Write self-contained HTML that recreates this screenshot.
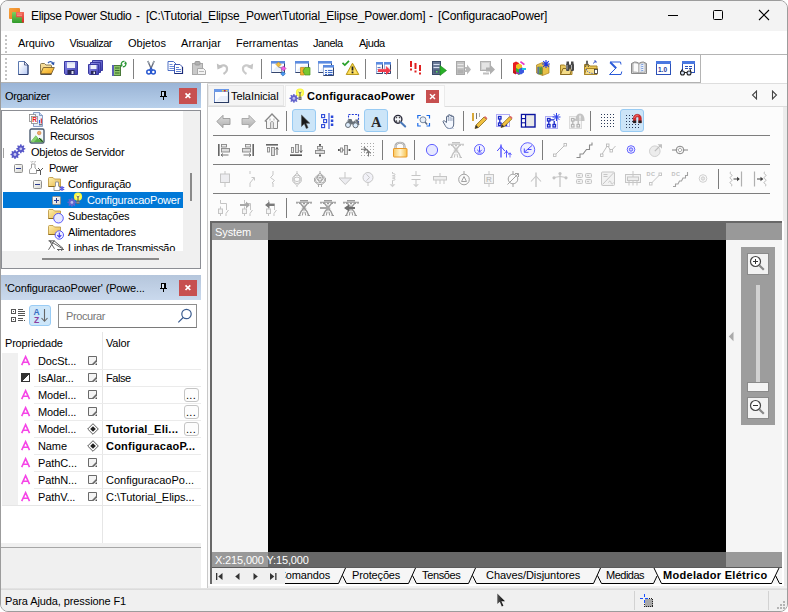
<!DOCTYPE html>
<html lang="pt"><head><meta charset="utf-8"><title>Elipse Power Studio</title>
<style>
html,body{margin:0;padding:0}
body{width:788px;height:612px;background:#fff;overflow:hidden;position:relative;font-family:"Liberation Sans",sans-serif;font-size:11px;color:#000}
#win{position:absolute;left:0;top:0;width:786px;height:610px;border:1px solid #9c9c9c;border-radius:8px;background:#f0f0f0;overflow:hidden}
/* all children positioned relative to #win padding box => offset by 1px; use wrapper shifted -1 */
#o{position:absolute;left:-1px;top:-1px;width:788px;height:612px}
.a{position:absolute}
.i{position:absolute;overflow:visible}
.t{position:absolute;white-space:pre;line-height:14px;height:14px}
.hl{position:absolute;height:1px;background:#a0a0a0}
.vl{position:absolute;width:1px;background:#a0a0a0}

</style></head>
<body>
<div id="win">
<div id="o">
<!-- title bar -->
<div class="a" style="left:0;top:0;width:788px;height:31px;background:#f3f3f3"></div>
<svg class="i" style="left:9px;top:8px" width="16" height="16" viewBox="0 0 16 16">
<defs><linearGradient id="gO" x1="0" y1="0" x2="1" y2="1"><stop offset="0" stop-color="#f7a540"/><stop offset="1" stop-color="#e8781a"/></linearGradient>
<linearGradient id="gG" x1="0" y1="0" x2="0" y2="1"><stop offset="0" stop-color="#7fd060"/><stop offset="1" stop-color="#2f9a2a"/></linearGradient>
<linearGradient id="gR" x1="0" y1="0" x2="0" y2="1"><stop offset="0" stop-color="#f46a5a"/><stop offset="1" stop-color="#d92b25"/></linearGradient></defs>
<rect x="0" y="0" width="11" height="11" rx="1" fill="url(#gO)"/>
<rect x="3" y="4" width="12" height="11" rx="1" fill="url(#gG)"/>
<path d="M7 4h8v10.5h-2.2V9.2H7z" fill="url(#gR)"/>
<path d="M8 6h5M8 7.6h5" stroke="#f9a79c" stroke-width=".7"/>
</svg>
<div class="t" style="left:31px;top:9px;font-size:12px;letter-spacing:-0.37px">Elipse Power Studio</div>
<div class="t" style="left:136px;top:9px;font-size:12px">-</div>
<div class="t" style="left:146px;top:9px;font-size:12px;letter-spacing:-0.215px">[C:\Tutorial_Elipse_Power\Tutorial_Elipse_Power.dom]</div>
<div class="t" style="left:429px;top:9px;font-size:12px">-</div>
<div class="t" style="left:438px;top:9px;font-size:12px;letter-spacing:-0.15px">[ConfiguracaoPower]</div>
<svg class="i" style="left:660px;top:4px" width="120" height="24" viewBox="0 0 120 24" fill="none" stroke="#000" stroke-width="1">
<path d="M8 11.5h10"/><rect x="53.5" y="6.500" width="9" height="9" rx="1"/><path d="M99 6l10 10M109 6l-10 10" stroke-width="1.1"/>
</svg>
<!-- menu bar -->
<div class="a" style="left:1px;top:31px;width:786px;height:23px;background:#fff"></div>
<svg class="i" style="left:4px;top:34px" width="4" height="20" viewBox="0 0 4 20" shape-rendering="crispEdges"><g fill="#c4c4c4"><rect x="1" y="1" width="2" height="2"/><rect x="1" y="5" width="2" height="2"/><rect x="1" y="9" width="2" height="2"/><rect x="1" y="13" width="2" height="2"/><rect x="1" y="17" width="2" height="2"/></g></svg>
<div class="t" style="left:18px;top:36px;letter-spacing:-0.1px">Arquivo</div>
<div class="t" style="left:69.500px;top:36px;letter-spacing:-0.5px">Visualizar</div>
<div class="t" style="left:128px;top:36px;letter-spacing:0px">Objetos</div>
<div class="t" style="left:181px;top:36px;letter-spacing:0.1px">Arranjar</div>
<div class="t" style="left:236px;top:36px;letter-spacing:0px">Ferramentas</div>
<div class="t" style="left:313px;top:36px;letter-spacing:-0.45px">Janela</div>
<div class="t" style="left:359px;top:36px;letter-spacing:-0.5px">Ajuda</div>
<!-- toolbar band -->
<div class="a" style="left:1px;top:54px;width:786px;height:29px;background:#fff"></div>
<div class="hl" style="left:1px;top:54px;width:786px;background:#b4b4b4"></div>
<div class="hl" style="left:1px;top:82px;width:700px;background:#b2b2b2"></div>
<div class="vl" style="left:700px;top:54px;height:29px;background:#b4b4b4"></div>
<svg class="i" style="left:4px;top:57px" width="4" height="24" viewBox="0 0 4 24" shape-rendering="crispEdges"><g fill="#c4c4c4"><rect x="1" y="1" width="2" height="2"/><rect x="1" y="5" width="2" height="2"/><rect x="1" y="9" width="2" height="2"/><rect x="1" y="13" width="2" height="2"/><rect x="1" y="17" width="2" height="2"/><rect x="1" y="21" width="2" height="2"/></g></svg>

<svg class="i" style="left:15px;top:60px" width="16" height="16" viewBox="0 0 16 16" ><defs><linearGradient id="gN" x1="0" y1="0" x2="1" y2="1"><stop offset=".2" stop-color="#fff"/><stop offset="1" stop-color="#b4c8f4"/></linearGradient></defs><path d="M3.500 1.500h6l3.500 3.500v9.500h-9.500z" fill="url(#gN)" stroke="#5a78b0"/><path d="M13 5v9.500h-9.500" fill="none" stroke="#2a3a68"/><path d="M9.500 1.500v3.500h3.500z" fill="#e8eefc" stroke="#3a4a78" stroke-width=".8"/></svg>
<svg class="i" style="left:39px;top:60px" width="16" height="16" viewBox="0 0 16 16" ><defs><linearGradient id="gOp" x1="0" y1="0" x2="1" y2="1"><stop offset="0" stop-color="#ffe070"/><stop offset="1" stop-color="#f0a018"/></linearGradient></defs><path d="M1.500 13.500v-9c0-.6.400-1 1-1h3l1.500 1.500h4.500c.6 0 1 .4 1 1v1.500" fill="#f4dc98" stroke="#8a7a50"/><path d="M1.500 14l2.800-6.500h11l-3 6.500z" fill="url(#gOp)" stroke="#7a6030" stroke-width=".9"/><path d="M1.500 14.200h11" stroke="#3a3020" stroke-width="1.100"/><path d="M9 3c1.500-2 4-1.800 5 .8" fill="none" stroke="#3a62b5" stroke-width="1.300"/><path d="M15.500 1.800l-.5 3.500-3-1.500z" fill="#2a52a8"/></svg>
<svg class="i" style="left:63px;top:60px" width="16" height="16" viewBox="0 0 16 16" ><defs><linearGradient id="gS" x1="0" y1="0" x2="1" y2="1"><stop offset="0" stop-color="#8a8ae8"/><stop offset="1" stop-color="#4040b0"/></linearGradient></defs><path d="M1.500 1.500h13v13h-12l-1-1z" fill="url(#gS)" stroke="#3838a0"/><rect x="4" y="2" width="8" height="6" fill="#eef0fa"/><path d="M4 2h8v1.500h-8z" fill="#d0d8f0"/><rect x="4.500" y="10" width="7" height="4.500" fill="#282858"/><rect x="8.500" y="11" width="2" height="3" fill="#e0e4f4"/></svg>
<svg class="i" style="left:87px;top:60px" width="16" height="16" viewBox="0 0 16 16" ><defs><linearGradient id="gS2" x1="0" y1="0" x2="1" y2="1"><stop offset="0" stop-color="#9090e8"/><stop offset="1" stop-color="#4040b0"/></linearGradient></defs><path d="M5.500 .5h10v10h-10z" fill="url(#gS2)" stroke="#3838a0"/><path d="M3.500 2.500h10v10h-10z" fill="url(#gS2)" stroke="#3838a0"/><path d="M1.500 4.500h10v10h-9l-1-1z" fill="url(#gS2)" stroke="#3838a0"/><rect x="3.500" y="5" width="6" height="4" fill="#eef0fa"/><rect x="4" y="11" width="5" height="3.500" fill="#282858"/><rect x="6.500" y="11.700" width="1.500" height="2.300" fill="#e0e4f4"/></svg>
<svg class="i" style="left:111px;top:60px" width="16" height="16" viewBox="0 0 16 16" ><rect x="1.500" y="5.500" width="8" height="10" fill="#8ec46a" stroke="#4a7a3a"/><rect x="1" y="5" width="2" height="11" fill="#5b60b8"/><path d="M4 8h4.500M4 10.500h4.500M4 13h4.500" stroke="#356a2a" stroke-width="1.200"/><path d="M10.500 5.500c-1-2.500 1-4.500 3-4" fill="none" stroke="#2f9a3a" stroke-width="1.300"/><path d="M9 5l1.800 2 1.200-2.600z" fill="#2f9a3a"/><path d="M14.500 2.500c1.200 2.300-.5 4.600-2.700 4.200" fill="none" stroke="#2f9a3a" stroke-width="1.300"/><path d="M16 3.500l-1.700-2.200-1.200 2.600z" fill="#2f9a3a"/></svg>
<div class="a" style="left:133px;top:59px;width:1px;height:20px;background:#808080"></div>
<svg class="i" style="left:143px;top:60px" width="16" height="16" viewBox="0 0 16 16" ><path d="M4.800 1l3.700 8.500M11.200 1l-3.700 8.500" stroke="#6a7080" stroke-width="1.400" fill="none"/><path d="M4.800 1l1.500 2.500M11.200 1l-1.500 2.500" stroke="#a0a8b0" stroke-width="1.400"/><circle cx="5.800" cy="12" r="2" fill="#fff" stroke="#2858d0" stroke-width="1.500"/><circle cx="10.300" cy="12" r="2" fill="#fff" stroke="#2858d0" stroke-width="1.500"/><path d="M6.500 10l1.500-1.800 1.500 1.800" stroke="#2858d0" stroke-width="1.300" fill="none"/></svg>
<svg class="i" style="left:167px;top:60px" width="16" height="16" viewBox="0 0 16 16" ><path d="M1 1.500h5.500l2.500 2.500v6.500h-8z" fill="#fff" stroke="#3a60c0" stroke-width=".9"/><path d="M2.500 4.500h3M2.500 6.500h4.500M2.500 8.500h4.500" stroke="#5b80d8" stroke-width=".9"/><path d="M7.500 4.500h5.500l2.500 2.500v6.500h-8z" fill="#fff" stroke="#2b45a8" stroke-width=".9"/><path d="M15.500 7v6.500h-8" fill="none" stroke="#1a2a78" stroke-width="1.200"/><path d="M9 7.500h3M9 9.500h5M9 11.500h5" stroke="#4a70d0" stroke-width=".9"/></svg>
<svg class="i" style="left:191px;top:60px" width="16" height="16" viewBox="0 0 16 16" ><rect x="1.500" y="3.500" width="10" height="11" fill="#c9c9c9" stroke="#a8a8a8"/><rect x="4" y="1.500" width="5" height="3.500" rx="1" fill="#b0b0b0" stroke="#9a9a9a"/><path d="M6.500 8.500h6l2 2v4h-8z" fill="#f3f3f3" stroke="#a8a8a8"/><path d="M8 11.500h5" stroke="#b8b8b8"/></svg>
<svg class="i" style="left:215px;top:60px" width="16" height="16" viewBox="0 0 16 16" ><path d="M5 6.500c2-2 6.500-1.500 7 1.500.3 2.500-1 4.500-3.500 6" fill="none" stroke="#c4c4c4" stroke-width="2.200"/><path d="M1.800 3.500l.7 6 5.500-2.500z" fill="#c0c0c0"/></svg>
<svg class="i" style="left:239px;top:60px" width="16" height="16" viewBox="0 0 16 16" ><path d="M11 6.500c-2-2-6.500-1.500-7 1.500-.3 2.500 1 4.500 3.500 6" fill="none" stroke="#cacaca" stroke-width="2.200"/><path d="M14.200 3.500l-.7 6-5.500-2.500z" fill="#c6c6c6"/></svg>
<div class="a" style="left:261px;top:59px;width:1px;height:20px;background:#808080"></div>
<svg class="i" style="left:268px;top:60px" width="16" height="16" viewBox="0 0 16 16" ><rect x="3.5" y="1.5" width="13" height="11" fill="#fff" stroke="#90a8d8" stroke-width=".9"/><path d="M16.5 3v9.5h-13" fill="none" stroke="#34446c" stroke-width="1"/><rect x="3" y="1" width="14" height="2.600" fill="#5b8be0"/><path d="M4 11.5l5.4 -6h6.6v6z" fill="#e4ecfa" opacity=".8"/><path d="M10.500 7.500h3v5" fill="none" stroke="#888" stroke-width=".8"/><path d="M10.500 2l2.500 2.500-2.500 2.500L8 4.500z" fill="#f4c040" stroke="#b88820" stroke-width=".6"/><path d="M15.500 6l2.500 2.500-2.500 2.500L13 8.500z" fill="#f060e0" stroke="#b030a8" stroke-width=".6"/><path d="M15 11.500l2.300 2.300-2.300 2.300-2.300-2.300z" fill="#4a98f0" stroke="#1a60b8" stroke-width=".6"/></svg>
<svg class="i" style="left:292px;top:60px" width="16" height="16" viewBox="0 0 16 16" ><rect x="3.5" y="1.5" width="13" height="11" fill="#fff" stroke="#90a8d8" stroke-width=".9"/><path d="M16.5 3v9.5h-13" fill="none" stroke="#34446c" stroke-width="1"/><rect x="3" y="1" width="14" height="2.600" fill="#5b8be0"/><path d="M4 11.5l5.4 -6h6.6v6z" fill="#e4ecfa" opacity=".8"/><path d="M8.500 7.500h4l-1.500 3.500 1.500 4h-4z" fill="#f4b030" stroke="#c08818" stroke-width=".7"/><path d="M18 7.500v7.500h-5l-2-4 2-3.500z" fill="#78c830" stroke="#48901c" stroke-width=".7"/></svg>
<svg class="i" style="left:315px;top:60px" width="16" height="16" viewBox="0 0 16 16" ><rect x="3.5" y="1.5" width="13" height="11" fill="#fff" stroke="#90a8d8" stroke-width=".9"/><path d="M16.5 3v9.5h-13" fill="none" stroke="#34446c" stroke-width="1"/><rect x="3" y="1" width="14" height="2.600" fill="#5b8be0"/><path d="M4 11.5l5.4 -6h6.6v6z" fill="#e4ecfa" opacity=".8"/><rect x="8.5" y="5.5" width="10" height="10" fill="#fff" stroke="#90a8d8" stroke-width=".9"/><path d="M18.5 7v8.5h-10" fill="none" stroke="#34446c" stroke-width="1"/><rect x="8" y="5" width="11" height="2.600" fill="#5b8be0"/><path d="M9 14.5l4.05 -5.2h4.95v5.2z" fill="#e4ecfa" opacity=".8"/><path d="M10 10.500h2M13 10.500h4.500M10 12.500h2M13 12.500h4.500M10 14.500h2M13 14.500h4.500" stroke="#3a68c8" stroke-width="1.100"/></svg>
<svg class="i" style="left:344px;top:60px" width="16" height="16" viewBox="0 0 16 16" ><path d="M8.500 3.200l6.300 11.300h-12.600z" fill="#f4d030" stroke="#b89820" stroke-linejoin="round" stroke-width="1"/><path d="M8.500 5l4.800 8.700h-9.600z" fill="#fce068"/><rect x="7.600" y="6.500" width="1.800" height="4" fill="#222"/><rect x="7.600" y="11.500" width="1.800" height="1.800" fill="#222"/><path d="M-1.500 2.800l2.300 2.300 4.200-4.300" fill="none" stroke="#28a028" stroke-width="1.700"/></svg>
<div class="a" style="left:365px;top:59px;width:1px;height:20px;background:#808080"></div>
<svg class="i" style="left:375px;top:60px" width="16" height="16" viewBox="0 0 16 16" ><rect x="1.5" y="2.5" width="6" height="11" fill="#fff" stroke="#90a8d8" stroke-width=".9"/><path d="M7.5 4v9.5h-6" fill="none" stroke="#34446c" stroke-width="1"/><rect x="1" y="2" width="7" height="2.600" fill="#5b8be0"/><path d="M2 12.5l2.25 -6h2.75v6z" fill="#e4ecfa" opacity=".8"/><rect x="9.5" y="2.5" width="6" height="11" fill="#fff" stroke="#90a8d8" stroke-width=".9"/><path d="M15.5 4v9.5h-6" fill="none" stroke="#34446c" stroke-width="1"/><rect x="9" y="2" width="7" height="2.600" fill="#5b8be0"/><path d="M10 12.5l2.25 -6h2.75v6z" fill="#e4ecfa" opacity=".8"/><path d="M2.500 7.500h3M2.500 9.500h3M2.500 11.500h3" stroke="#3a55b0" stroke-width=".8"/><path d="M3 9h8v-3l5 4.500-5 4.500v-3h-8z" fill="#f03a4a"/><path d="M3 9h8v-3l5 4.500" fill="none" stroke="#f8a0a8" stroke-width=".5"/></svg>
<div class="a" style="left:397px;top:59px;width:1px;height:20px;background:#808080"></div>
<svg class="i" style="left:407px;top:60px" width="16" height="16" viewBox="0 0 16 16" ><g fill="#e02020"><rect x="3" y="1" width="2" height="6"/><rect x="3" y="8.500" width="2" height="2"/><rect x="7.500" y="3" width="2" height="6"/><rect x="7.500" y="10.500" width="2" height="2"/><rect x="12" y="5" width="2" height="6"/><rect x="12" y="12.500" width="2" height="2"/></g></svg>
<svg class="i" style="left:431px;top:60px" width="16" height="16" viewBox="0 0 16 16" ><rect x="1.500" y="1.500" width="8" height="13" fill="#6a7a98" stroke="#3a4a68"/><path d="M2.500 4.500h6M2.500 7.500h6" stroke="#d8e0f0"/><rect x="2.500" y="9.500" width="6" height="4" fill="#4a5a78"/><rect x="5" y="11" width="1.500" height="1.500" fill="#5be05b"/><path d="M9 5.500l6.500 5-6.500 5z" fill="#28b028" stroke="#188018" stroke-width=".6"/></svg>
<svg class="i" style="left:455px;top:60px" width="16" height="16" viewBox="0 0 16 16" ><rect x="1.500" y="1.500" width="8" height="13" fill="#c4c4c4" stroke="#a8a8a8"/><path d="M2.500 4.500h6M2.500 7.500h6" stroke="#e8e8e8"/><rect x="2.500" y="9.500" width="6" height="4" fill="#b0b0b0"/><path d="M9 7h3v-2.500l4 5-4 5v-2.500h-3l2-2.500z" fill="#b8b8b8"/></svg>
<svg class="i" style="left:479px;top:60px" width="16" height="16" viewBox="0 0 16 16" ><rect x="1.500" y="1.500" width="10" height="9" fill="#d0d0d0" stroke="#b0b0b0"/><rect x="3" y="3" width="7" height="6" fill="#e4e4e4"/><path d="M4 12.500h6v2h-6z" fill="#c0c0c0"/><path d="M7 7.500h4v-3l5 5-5 5v-3h-4z" fill="#b0b0b0"/></svg>
<div class="a" style="left:501px;top:59px;width:1px;height:20px;background:#808080"></div>
<svg class="i" style="left:511px;top:60px" width="16" height="16" viewBox="0 0 16 16" ><path d="M2 3l3-1.500 3 1.500v9l-3 2-3-1.500z" fill="#e82020"/><path d="M5 8l3-1.500 3 1.500v5l-3 2-3-2z" fill="#28b838"/><path d="M5 5l3-1.500 3 1.500v3l-3 1.500-3-1.500z" fill="#f0c020"/><path d="M8 9l3-1.500 2 1v4l-3 2-2-1z" fill="#3a58e0"/><path d="M10 1l4 3-1.200 1.200-4-3z" fill="#e838c8"/><path d="M11 8h4v2h-4z" fill="#20c8e0"/><path d="M2 10l3 1.500v3l-3-1.500z" fill="#c01818"/><path d="M5 11.500l3 1.500v2l-3-2z" fill="#a030b8"/></svg>
<svg class="i" style="left:535px;top:60px" width="16" height="16" viewBox="0 0 16 16" ><path d="M1.500 5l6-2.500 6.500 2.500v8l-6.500 2.500-6-2.500z" fill="#e8c048" stroke="#a88020" stroke-width=".7"/><path d="M7.500 7.500v8" stroke="#a88020" stroke-width=".7"/><rect x="3" y="7" width="4" height="7" fill="#78b858" stroke="#4a7a3a" stroke-width=".6"/><rect x="2.500" y="7" width="1.200" height="7" fill="#5b60b8"/><path d="M4.500 9h2M4.500 11h2M4.500 13h2" stroke="#356a2a"/><path d="M11 0v8M7 4h8M8.200 1.200l5.600 5.600M13.800 1.200L8.200 6.800" stroke="#2038e0" stroke-width="1.100"/></svg>
<svg class="i" style="left:559px;top:60px" width="16" height="16" viewBox="0 0 16 16" ><path d="M1.500 14.500v-9.500h4l1.500 1.500h6v8z" fill="#e8c860" stroke="#a88428"/><path d="M1.500 14.500l2.500-6h9l-2 6z" fill="#f4dc88" stroke="#8a6a20"/><g fill="#484848"><rect x="7" y="3.500" width="3.500" height="7.500" rx="1.200"/><rect x="11.500" y="3.500" width="3.500" height="7.500" rx="1.200"/><rect x="10" y="5" width="2" height="3"/><rect x="7.500" y="1.500" width="2.500" height="2.500"/><rect x="12" y="1.500" width="2.500" height="2.500"/></g><path d="M8 5v4.500M12.500 5v4.500" stroke="#b0b0b0" stroke-width="1"/></svg>
<svg class="i" style="left:583px;top:60px" width="16" height="16" viewBox="0 0 16 16" ><path d="M1.500 14.500v-10h4l1.500 1.500h7v8.500z" fill="#ecc858" stroke="#a88428"/><path d="M1.500 14.500l2-6h11l-2 6z" fill="#f6de8a" stroke="#a88428"/><path d="M4 1l-1.500 6M4 1l1.500 6" stroke="#444" stroke-width=".9"/><circle cx="4" cy="1.500" r="1" fill="#666"/><path d="M3 9c1 3 4 4.500 8 4.500" fill="none" stroke="#3a55c8" stroke-width="1" stroke-dasharray="1.200 1.200"/><path d="M10 3.500l3-2.500M13 1h-2M13 1v2" stroke="#3a55c8" stroke-width=".9" fill="none"/><rect x="11.500" y="9.500" width="3" height="4" fill="#fff" stroke="#333" stroke-width=".8"/></svg>
<svg class="i" style="left:607px;top:60px" width="16" height="16" viewBox="0 0 16 16" ><path d="M14 4.500l-.5-2.500h-10.500l6 6-6.500 6.500h11.500l.8-3" fill="none" stroke="#2a5ad8" stroke-width="1" stroke-linejoin="miter"/><path d="M3.200 2.200l6 6" stroke="#2a5ad8" stroke-width="2"/></svg>
<svg class="i" style="left:631px;top:60px" width="16" height="16" viewBox="0 0 16 16" ><path d="M.5 3.500l3-1.500c2 0 3.500.5 4.500 1.500 1-1 2.500-1.500 4.500-1.500l3 1.500v10h-15z" fill="#d8d8d8" stroke="#707070" stroke-width=".8"/><path d="M2 3c2-.5 4.500 0 6 1.200v9c-1.500-1-4-1.500-6-1z" fill="#fafafa" stroke="#808080" stroke-width=".6"/><path d="M14 3c-2-.5-4.500 0-6 1.200v9c1.500-1 4-1.500 6-1z" fill="#fafafa" stroke="#808080" stroke-width=".6"/><path d="M9.500 5l3-.8M9.500 7l3-.8M9.500 9l3-.8M9.500 11l3-.8" stroke="#5a88d8" stroke-width=".8"/></svg>
<svg class="i" style="left:655px;top:60px" width="16" height="16" viewBox="0 0 16 16" ><rect x="1.500" y="1.500" width="14" height="13" fill="#fff" stroke="#2a50b8"/><rect x="1" y="1" width="15" height="3" fill="#4a78e0"/><text x="3" y="12" font-family="Liberation Sans,sans-serif" font-weight="700" font-size="6.500" fill="#1a3aa0">1.0</text></svg>
<svg class="i" style="left:679px;top:60px" width="16" height="16" viewBox="0 0 16 16" ><rect x="3.500" y="1.500" width="12" height="11" fill="#fff" stroke="#2a50b8"/><rect x="3" y="1" width="13" height="3" fill="#4a78e0"/><path d="M6 6.500h3M10 6.500h3M6 8.500h3M10 8.500h3" stroke="#2a50b8" stroke-width="1.200"/><circle cx="3.500" cy="13" r="2" fill="#d8e4f8" stroke="#222" stroke-width="1.100"/><circle cx="10" cy="13" r="2" fill="#d8e4f8" stroke="#222" stroke-width="1.100"/><path d="M5.500 12.500h2.500M1.500 12l2-3M12 12l-1-3" stroke="#222" stroke-width="1" fill="none"/></svg>
<!-- ===== left dock ===== -->
<div class="a" style="left:1px;top:83px;width:206px;height:506px;background:#fff"></div>
<!-- Organizer header -->
<div class="a" style="left:1px;top:83px;width:200px;height:25px;background:linear-gradient(#9ab4d6,#b8d0eb)"></div>
<div class="t" style="left:5px;top:89px;letter-spacing:-0.38px">Organizer</div>
<svg class="i" style="left:159px;top:91px" width="9" height="10" viewBox="0 0 9 10" shape-rendering="crispEdges"><rect x="2" y="0" width="5" height="5" fill="#000"/><rect x="3" y="1" width="2" height="4" fill="#c4d6ec"/><rect x="1" y="5" width="7" height="1" fill="#000"/><rect x="4" y="6" width="1" height="3" fill="#000"/></svg>
<div class="a" style="left:179px;top:88px;width:18px;height:16px;background:#c75050"></div>
<svg class="i" style="left:184px;top:92px" width="8" height="8" viewBox="0 0 8 8"><path d="M1.500 1.300l4.800 4.700M6.300 1.300l-4.800 4.700" stroke="#fff" stroke-width="1.700"/></svg>
<!-- tree box -->
<div class="a" style="left:1px;top:110px;width:198px;height:157px;border:1px solid #8c8e94;border-bottom-color:#8c8e94;background:#f0f0f0"></div>
<div class="a" id="tree" style="left:2px;top:111px;width:181px;height:140px;background:#fff;overflow:hidden">
 <div class="a" style="left:1px;top:81px;width:180px;height:16px;background:#0078d7"></div>
 <div class="a" style="left:1px;top:37px;width:1px;height:10px;background:#a0a0a0"></div>
 <!-- rows: y offsets relative to tree (tree top=111) -->
 <div class="t" style="left:48px;top:2px;letter-spacing:-0.2px">Relatórios</div>
 <div class="t" style="left:48px;top:18px;letter-spacing:-0.33px">Recursos</div>
 <div class="t" style="left:29px;top:34px;letter-spacing:-0.2px">Objetos de Servidor</div>
 <div class="t" style="left:47px;top:50px;letter-spacing:-0.5px">Power</div>
 <div class="t" style="left:66px;top:66px;letter-spacing:-0.2px">Configuração</div>
 <div class="t" style="left:85px;top:82px;letter-spacing:-0.2px;color:#fff">ConfiguracaoPower</div>
 <div class="t" style="left:66px;top:98px;letter-spacing:-0.2px">Subestações</div>
 <div class="t" style="left:66px;top:114px;letter-spacing:-0.2px">Alimentadores</div>
 <div class="t" style="left:66px;top:130px;letter-spacing:-0.29px">Linhas de Transmissão</div>
 <svg class="i" style="left:27px;top:1px" width="16" height="16" viewBox="0 0 16 16"><path d="M4.500 .5h6l3 3v11h-9z" fill="#e8f0fc" stroke="#7088b8" stroke-width=".8"/><path d="M10.500 .5v3h3" fill="#c8d8f0" stroke="#7088b8" stroke-width=".8"/><rect x=".5" y="2.500" width="6" height="7" fill="#fff" stroke="#888" stroke-width=".8"/><rect x="2.500" y="4.500" width="6" height="7" fill="#fff" stroke="#888" stroke-width=".8"/><text x="3.300" y="10.300" font-family="Liberation Sans,sans-serif" font-weight="700" font-size="6.500" fill="#e81818">R</text><path d="M10.500 8v3.500" stroke="#2858e0" stroke-width="1.100"/><path d="M12.300 6.500v5" stroke="#e02020" stroke-width="1.100"/><path d="M10 12.800h3" stroke="#333" stroke-width=".9"/></svg>
<svg class="i" style="left:27px;top:17px" width="16" height="16" viewBox="0 0 16 16"><rect x="1" y="1" width="14" height="14" rx="1.500" fill="#f4f8fc" stroke="#4a5a70" stroke-width="1.400"/><circle cx="10.200" cy="5" r="1.800" fill="#f0a868" stroke="#c87838" stroke-width=".6"/><path d="M1.800 13.500l5-6 3.500 4 1.500-1.500 2.500 3v1.200h-12.500z" fill="#58b048"/><path d="M1.800 13.500l5-6 2 2.300-4 4.400z" fill="#88d070"/><path d="M10 10l3.500 3.800" stroke="#222" stroke-width="1"/></svg>
<svg class="i" style="left:8px;top:33px" width="16" height="16" viewBox="0 0 16 16"><polygon points="15.37,4.25 15.37,5.35 13.99,5.69 13.69,6.42 14.42,7.64 13.64,8.42 12.42,7.69 11.69,7.99 11.35,9.37 10.25,9.37 9.91,7.99 9.18,7.69 7.96,8.42 7.18,7.64 7.91,6.42 7.61,5.69 6.23,5.35 6.23,4.25 7.61,3.91 7.91,3.18 7.18,1.96 7.96,1.18 9.18,1.91 9.91,1.61 10.25,0.23 11.35,0.23 11.69,1.61 12.42,1.91 13.64,1.18 14.42,1.96 13.69,3.18 13.99,3.91" fill="#5858c8"/><circle cx="10.8" cy="4.8" r="1.38" fill="#c8c8f0"/><polygon points="9.57,9.95 9.57,11.05 8.19,11.39 7.89,12.12 8.62,13.34 7.84,14.12 6.62,13.39 5.89,13.69 5.55,15.07 4.45,15.07 4.11,13.69 3.38,13.39 2.16,14.12 1.38,13.34 2.11,12.12 1.81,11.39 0.43,11.05 0.43,9.95 1.81,9.61 2.11,8.88 1.38,7.66 2.16,6.88 3.38,7.61 4.11,7.31 4.45,5.93 5.55,5.93 5.89,7.31 6.62,7.61 7.84,6.88 8.62,7.66 7.89,8.88 8.19,9.61" fill="#5858c8"/><circle cx="5" cy="10.5" r="1.38" fill="#c8c8f0"/></svg>
<svg class="i" style="left:12px;top:53px" width="9" height="9" viewBox="0 0 9 9"><defs><linearGradient id="gE" x1="0" y1="0" x2="1" y2="1"><stop offset="0" stop-color="#fff"/><stop offset="1" stop-color="#d8d8d0"/></linearGradient></defs><rect x=".5" y=".5" width="8" height="8" rx="1" fill="url(#gE)" stroke="#919191"/><path d="M2 4.500h5" stroke="#2a3a90"/></svg>
<svg class="i" style="left:27px;top:49px" width="16" height="16" viewBox="0 0 16 16"><path d="M1.500 1l1.500 1.500M4 1L2.500 2.500M4.500 1l1.500 1.500M7 1L5.500 2.500" stroke="#aaa" stroke-width=".7"/><path d="M2.500 4h3.500v4l1.500 1.500v4h-7v-4l2-1.500z" fill="#fff" stroke="#a0a0a0" stroke-width="1"/><path d="M7.500 10.500h4M9 8l2.500 2.500 2.500-2.500M11.500 10.500v4.500" fill="none" stroke="#444" stroke-width=".9"/></svg>
<svg class="i" style="left:31px;top:69px" width="9" height="9" viewBox="0 0 9 9"><defs><linearGradient id="gE" x1="0" y1="0" x2="1" y2="1"><stop offset="0" stop-color="#fff"/><stop offset="1" stop-color="#d8d8d0"/></linearGradient></defs><rect x=".5" y=".5" width="8" height="8" rx="1" fill="url(#gE)" stroke="#919191"/><path d="M2 4.500h5" stroke="#2a3a90"/></svg>
<svg class="i" style="left:46px;top:65px" width="16" height="16" viewBox="0 0 16 16"><defs><linearGradient id="gF" x1="0" y1="0" x2="1" y2="1"><stop offset="0" stop-color="#fff0b0"/><stop offset="1" stop-color="#e8b848"/></linearGradient></defs><path d="M.5 10.500v-8c0-.8.500-1 1-1h3.500l1.500 1.500h6v7.500z" fill="url(#gF)" stroke="#b89038" stroke-width=".8"/><path d="M.5 10.500h12" stroke="#8a6a20" stroke-width="1"/><path d="M7.500 4.500l1 1M9.500 4.500l-1 1" stroke="#bbb" stroke-width=".6"/><path d="M7.500 6h3v4l1.500 1.500v3h-6v-3l1.500-1.500z" fill="#fff" stroke="#909090" stroke-width=".9"/><path d="M14 10v5M11.800 11.200l4.400 2.600M16.200 11.200l-4.400 2.600" stroke="#4848e0" stroke-width="1.100"/></svg>
<svg class="i" style="left:50px;top:85px" width="9" height="9" viewBox="0 0 9 9"><defs><linearGradient id="gE" x1="0" y1="0" x2="1" y2="1"><stop offset="0" stop-color="#fff"/><stop offset="1" stop-color="#d8d8d0"/></linearGradient></defs><rect x=".5" y=".5" width="8" height="8" rx="1" fill="url(#gE)" stroke="#919191"/><path d="M2 4.500h5" stroke="#2a3a90"/><path d="M4.500 2v5" stroke="#2a3a90"/></svg>
<svg class="i" style="left:65px;top:81px" width="16" height="16" viewBox="0 0 16 16"><polygon points="9.37,9.86 9.37,10.94 8.02,11.27 7.72,11.99 8.44,13.18 7.68,13.94 6.49,13.22 5.77,13.52 5.44,14.87 4.36,14.87 4.03,13.52 3.31,13.22 2.12,13.94 1.36,13.18 2.08,11.99 1.78,11.27 0.43,10.94 0.43,9.86 1.78,9.53 2.08,8.81 1.36,7.62 2.12,6.86 3.31,7.58 4.03,7.28 4.36,5.93 5.44,5.93 5.77,7.28 6.49,7.58 7.68,6.86 8.44,7.62 7.72,8.81 8.02,9.53" fill="#6464cc"/><circle cx="4.9" cy="10.4" r="1.35" fill="#c0c0ec"/><defs><radialGradient id="gY2"><stop offset="0" stop-color="#ffffd8"/><stop offset=".6" stop-color="#ffff58"/><stop offset="1" stop-color="#f6f238"/></radialGradient></defs><circle cx="11" cy="4.700" r="4.100" fill="url(#gY2)"/><path d="M9.800 3.800l1.200 1.800 1.200-1.800M11 5.600v3.500" fill="none" stroke="#333" stroke-width=".8"/><rect x="9.500" y="8.800" width="3" height="3.200" fill="#6a6a6a"/><path d="M9.500 10.400h3" stroke="#aaa" stroke-width=".6"/></svg>
<svg class="i" style="left:46px;top:97px" width="16" height="16" viewBox="0 0 16 16"><defs><linearGradient id="gF" x1="0" y1="0" x2="1" y2="1"><stop offset="0" stop-color="#fff0b0"/><stop offset="1" stop-color="#e8b848"/></linearGradient></defs><path d="M.5 10.500v-8c0-.8.500-1 1-1h3.500l1.500 1.500h6v7.500z" fill="url(#gF)" stroke="#b89038" stroke-width=".8"/><path d="M.5 10.500h12" stroke="#8a6a20" stroke-width="1"/><circle cx="10.500" cy="10.200" r="4.800" fill="#e8e8ff" stroke="#4848f8" stroke-width=".9"/></svg>
<svg class="i" style="left:46px;top:113px" width="16" height="16" viewBox="0 0 16 16"><defs><linearGradient id="gF" x1="0" y1="0" x2="1" y2="1"><stop offset="0" stop-color="#fff0b0"/><stop offset="1" stop-color="#e8b848"/></linearGradient></defs><path d="M.5 10.500v-8c0-.8.500-1 1-1h3.500l1.500 1.500h6v7.500z" fill="url(#gF)" stroke="#b89038" stroke-width=".8"/><path d="M.5 10.500h12" stroke="#8a6a20" stroke-width="1"/><circle cx="11.300" cy="11" r="4.200" fill="#f0f0ff" stroke="#4848f8" stroke-width=".9"/><path d="M11.300 8.500v4.500M9.300 11.200l2 2 2-2" fill="none" stroke="#3838f0" stroke-width="1.100"/></svg>
<svg class="i" style="left:46px;top:129px" width="16" height="16" viewBox="0 0 16 16"><g fill="none" stroke="#555" stroke-width=".9"><path d="M.5 .8h6M1.500 .8l5 8M6 .8l-5.500 9M1.500 .8l14 8.500M6 .8l9 7.500M9 9.500h7M10 9.500l1 1.500M13 9.500l1 1.500"/></g></svg>
</div>
<div class="a" style="left:190px;top:173px;width:2px;height:28px;background:#8a8a8a"></div>
<div class="a" style="left:42px;top:258px;width:117px;height:2px;background:#8a8a8a"></div>
<!-- Properties header -->
<div class="a" style="left:1px;top:275px;width:200px;height:25px;background:linear-gradient(#b5c6dc,#cad9ed)"></div>
<div class="t" style="left:5px;top:281px;letter-spacing:-0.16px">'ConfiguracaoPower' (Powe...</div>
<svg class="i" style="left:159px;top:283px" width="9" height="10" viewBox="0 0 9 10" shape-rendering="crispEdges"><rect x="2" y="0" width="5" height="5" fill="#000"/><rect x="3" y="1" width="2" height="4" fill="#dfe8f4"/><rect x="1" y="5" width="7" height="1" fill="#000"/><rect x="4" y="6" width="1" height="3" fill="#000"/></svg>
<div class="a" style="left:179px;top:280px;width:18px;height:16px;background:#c75050"></div>
<svg class="i" style="left:184px;top:284px" width="8" height="8" viewBox="0 0 8 8"><path d="M1.500 1.300l4.800 4.700M6.300 1.300l-4.800 4.700" stroke="#fff" stroke-width="1.700"/></svg>
<!-- prop toolbar -->
<svg class="i" style="left:11px;top:309px" width="15" height="15" viewBox="0 0 15 15" shape-rendering="crispEdges"><g fill="none" stroke="#555"><rect x=".5" y=".5" width="4" height="4"/><rect x=".5" y="8.500" width="4" height="4"/></g><g fill="#555"><rect x="2" y="2" width="1" height="1"/><rect x="2" y="10" width="1" height="1"/><rect x="7" y="0" width="5" height="1"/><rect x="7" y="2" width="7" height="1"/><rect x="7" y="4" width="7" height="1"/><rect x="7" y="6" width="7" height="1"/><rect x="7" y="9" width="5" height="1"/><rect x="7" y="11" width="5" height="1"/><rect x="13" y="11" width="1" height="1"/><rect x="13" y="6" width="1" height="1"/></g></svg>
<div class="a" style="left:29px;top:305px;width:20px;height:19px;border:1px solid #99ccf5;border-radius:3px;background:#cde6f9"></div>
<svg class="i" style="left:33px;top:308px" width="16" height="16" viewBox="0 0 16 16"><text x="0.500" y="7" font-family="Liberation Sans,sans-serif" font-size="8.500" font-weight="700" fill="#3a6fc4">A</text><text x="1" y="14.500" font-family="Liberation Sans,sans-serif" font-size="8.500" font-weight="700" fill="#8c3fa0">Z</text><path d="M11.500 1v12M8.500 10l3 3.300 3-3.300" fill="none" stroke="#666" stroke-width="1.100"/></svg>
<div class="a" style="left:58px;top:304px;width:137px;height:22px;border:1px solid #8e8e8e;border-bottom-color:#7a7a7a;background:#fff"></div>
<div class="t" style="left:66px;top:309px;color:#767676;letter-spacing:-0.38px">Procurar</div>
<svg class="i" style="left:177px;top:308px" width="16" height="16" viewBox="0 0 16 16" fill="none" stroke="#3b5c8f" stroke-width="1.200"><circle cx="9.500" cy="6" r="4.700"/><path d="M6.200 9.500L1.300 14.400"/></svg>
<!-- prop grid -->
<div class="t" style="left:5px;top:336px;letter-spacing:-0.2px">Propriedade</div>
<div class="t" style="left:106px;top:336px;letter-spacing:-0.2px">Valor</div>
<div class="a" style="left:2px;top:353px;width:16px;height:152px;background:#f0f0f0"></div>
<div class="a" style="left:102px;top:332px;width:1px;height:212px;background:#e6e6e6"></div>
<div class="a" style="left:34px;top:369px;width:167px;height:1px;background:#ebebeb"></div>
<svg class="i" style="left:20px;top:355px" width="12" height="12" viewBox="0 0 12 12"><path d="M1.700 10.200L5.600 1.700l3.900 8.500M3.200 7.300h4.800" fill="none" stroke="#f545e6" stroke-width="1.600" stroke-linejoin="miter"/></svg>
<div class="t" style="left:38px;top:354px;letter-spacing:-0.1px">DocSt...</div>
<svg class="i" style="left:88px;top:356px" width="10" height="10" viewBox="0 0 10 10"><path d="M.5 .5h8v5.500L5.500 8.500H.5z" fill="#f4f4f4" stroke="#6a6a6a"/><path d="M8.500 4.500L4.500 8.500" stroke="#6a6a6a" stroke-width="1.200"/><path d="M9 7v2H7z" fill="#555"/></svg>
<div class="a" style="left:34px;top:386px;width:167px;height:1px;background:#ebebeb"></div>
<svg class="i" style="left:21px;top:373px" width="10" height="10" viewBox="0 0 10 10" shape-rendering="crispEdges"><rect x=".5" y=".5" width="8" height="8" fill="#fff" stroke="#333"/><path d="M1 1h7L1 8z" fill="#333"/></svg>
<div class="t" style="left:38px;top:371px;letter-spacing:-0.1px">IsAlar...</div>
<svg class="i" style="left:88px;top:373px" width="10" height="10" viewBox="0 0 10 10"><path d="M.5 .5h8v5.500L5.500 8.500H.5z" fill="#f4f4f4" stroke="#6a6a6a"/><path d="M8.500 4.500L4.500 8.500" stroke="#6a6a6a" stroke-width="1.200"/><path d="M9 7v2H7z" fill="#555"/></svg>
<div class="t" style="left:106px;top:371px;letter-spacing:-0.45px;">False</div>
<div class="a" style="left:34px;top:403px;width:167px;height:1px;background:#ebebeb"></div>
<svg class="i" style="left:20px;top:389px" width="12" height="12" viewBox="0 0 12 12"><path d="M1.700 10.200L5.600 1.700l3.900 8.500M3.200 7.300h4.800" fill="none" stroke="#f545e6" stroke-width="1.600" stroke-linejoin="miter"/></svg>
<div class="t" style="left:38px;top:388px;letter-spacing:-0.1px">Model...</div>
<svg class="i" style="left:88px;top:390px" width="10" height="10" viewBox="0 0 10 10"><path d="M.5 .5h8v5.500L5.500 8.500H.5z" fill="#f4f4f4" stroke="#6a6a6a"/><path d="M8.500 4.500L4.500 8.500" stroke="#6a6a6a" stroke-width="1.200"/><path d="M9 7v2H7z" fill="#555"/></svg>
<div class="a" style="left:184px;top:388px;width:13px;height:12px;border:1px solid #c4c4c4;border-radius:3px;background:#fdfdfd"></div><div class="t" style="left:186px;top:388px;letter-spacing:0.3px">...</div>
<div class="a" style="left:34px;top:420px;width:167px;height:1px;background:#ebebeb"></div>
<svg class="i" style="left:20px;top:406px" width="12" height="12" viewBox="0 0 12 12"><path d="M1.700 10.200L5.600 1.700l3.900 8.500M3.200 7.300h4.800" fill="none" stroke="#f545e6" stroke-width="1.600" stroke-linejoin="miter"/></svg>
<div class="t" style="left:38px;top:405px;letter-spacing:-0.1px">Model...</div>
<svg class="i" style="left:88px;top:407px" width="10" height="10" viewBox="0 0 10 10"><path d="M.5 .5h8v5.500L5.500 8.500H.5z" fill="#f4f4f4" stroke="#6a6a6a"/><path d="M8.500 4.500L4.500 8.500" stroke="#6a6a6a" stroke-width="1.200"/><path d="M9 7v2H7z" fill="#555"/></svg>
<div class="a" style="left:184px;top:405px;width:13px;height:12px;border:1px solid #c4c4c4;border-radius:3px;background:#fdfdfd"></div><div class="t" style="left:186px;top:405px;letter-spacing:0.3px">...</div>
<div class="a" style="left:34px;top:437px;width:167px;height:1px;background:#ebebeb"></div>
<svg class="i" style="left:20px;top:423px" width="12" height="12" viewBox="0 0 12 12"><path d="M1.700 10.200L5.600 1.700l3.900 8.500M3.200 7.300h4.800" fill="none" stroke="#f545e6" stroke-width="1.600" stroke-linejoin="miter"/></svg>
<div class="t" style="left:38px;top:422px;letter-spacing:-0.1px">Model...</div>
<svg class="i" style="left:87px;top:423px" width="12" height="12" viewBox="0 0 12 12"><path d="M6 .7L11.300 6 6 11.300 .7 6z" fill="#fff" stroke="#444" stroke-width=".9"/><path d="M6 3.200L8.800 6 6 8.800 3.200 6z" fill="#222"/></svg>
<div class="t" style="left:106px;top:422px;letter-spacing:0.27px;font-weight:700;">Tutorial_Eli...</div>
<div class="a" style="left:184px;top:422px;width:13px;height:12px;border:1px solid #c4c4c4;border-radius:3px;background:#fdfdfd"></div><div class="t" style="left:186px;top:422px;letter-spacing:0.3px">...</div>
<div class="a" style="left:34px;top:454px;width:167px;height:1px;background:#ebebeb"></div>
<svg class="i" style="left:20px;top:440px" width="12" height="12" viewBox="0 0 12 12"><path d="M1.700 10.200L5.600 1.700l3.900 8.500M3.200 7.300h4.800" fill="none" stroke="#f545e6" stroke-width="1.600" stroke-linejoin="miter"/></svg>
<div class="t" style="left:38px;top:439px;letter-spacing:-0.1px">Name</div>
<svg class="i" style="left:87px;top:440px" width="12" height="12" viewBox="0 0 12 12"><path d="M6 .7L11.300 6 6 11.300 .7 6z" fill="#fff" stroke="#444" stroke-width=".9"/><path d="M6 3.200L8.800 6 6 8.800 3.200 6z" fill="#222"/></svg>
<div class="t" style="left:106px;top:439px;letter-spacing:0.21px;font-weight:700;">ConfiguracaoP...</div>
<div class="a" style="left:34px;top:471px;width:167px;height:1px;background:#ebebeb"></div>
<svg class="i" style="left:20px;top:457px" width="12" height="12" viewBox="0 0 12 12"><path d="M1.700 10.200L5.600 1.700l3.900 8.500M3.200 7.300h4.800" fill="none" stroke="#f545e6" stroke-width="1.600" stroke-linejoin="miter"/></svg>
<div class="t" style="left:38px;top:456px;letter-spacing:-0.1px">PathC...</div>
<svg class="i" style="left:88px;top:458px" width="10" height="10" viewBox="0 0 10 10"><path d="M.5 .5h8v5.500L5.500 8.500H.5z" fill="#f4f4f4" stroke="#6a6a6a"/><path d="M8.500 4.500L4.500 8.500" stroke="#6a6a6a" stroke-width="1.200"/><path d="M9 7v2H7z" fill="#555"/></svg>
<div class="a" style="left:34px;top:488px;width:167px;height:1px;background:#ebebeb"></div>
<svg class="i" style="left:20px;top:474px" width="12" height="12" viewBox="0 0 12 12"><path d="M1.700 10.200L5.600 1.700l3.900 8.500M3.200 7.300h4.800" fill="none" stroke="#f545e6" stroke-width="1.600" stroke-linejoin="miter"/></svg>
<div class="t" style="left:38px;top:473px;letter-spacing:-0.1px">PathN...</div>
<svg class="i" style="left:88px;top:475px" width="10" height="10" viewBox="0 0 10 10"><path d="M.5 .5h8v5.500L5.500 8.500H.5z" fill="#f4f4f4" stroke="#6a6a6a"/><path d="M8.500 4.500L4.500 8.500" stroke="#6a6a6a" stroke-width="1.200"/><path d="M9 7v2H7z" fill="#555"/></svg>
<div class="t" style="left:106px;top:473px;letter-spacing:0px;">ConfiguracaoPo...</div>
<div class="a" style="left:2px;top:505px;width:199px;height:1px;background:#e6e6e6"></div>
<svg class="i" style="left:20px;top:491px" width="12" height="12" viewBox="0 0 12 12"><path d="M1.700 10.200L5.600 1.700l3.900 8.500M3.200 7.300h4.800" fill="none" stroke="#f545e6" stroke-width="1.600" stroke-linejoin="miter"/></svg>
<div class="t" style="left:38px;top:490px;letter-spacing:-0.1px">PathV...</div>
<svg class="i" style="left:88px;top:492px" width="10" height="10" viewBox="0 0 10 10"><path d="M.5 .5h8v5.500L5.500 8.500H.5z" fill="#f4f4f4" stroke="#6a6a6a"/><path d="M8.500 4.500L4.500 8.500" stroke="#6a6a6a" stroke-width="1.200"/><path d="M9 7v2H7z" fill="#555"/></svg>
<div class="t" style="left:106px;top:490px;letter-spacing:-0.05px;">C:\Tutorial_Elips...</div>
<div class="a" style="left:1px;top:543px;width:200px;height:5px;background:#f0f0f0"></div>
<div class="hl" style="left:1px;top:547px;width:200px;background:#a6a6a6"></div>
<div class="a" style="left:1px;top:548px;width:200px;height:41px;background:#f0f0f0"></div>

<!-- ===== document area ===== -->
<div class="a" style="left:207px;top:83px;width:580px;height:503px;background:#fcfcfc"></div>
<div class="a" style="left:207px;top:83px;width:1px;height:506px;background:#c8c8c8"></div>
<div class="a" style="left:783px;top:107px;width:4px;height:479px;background:#ececec"></div>
<div class="a" style="left:207px;top:83px;width:580px;height:1px;background:#dedede"></div>
<div class="a" style="left:208px;top:84px;width:579px;height:22px;background:#f9f9f9"></div>
<div class="a" style="left:208px;top:106px;width:579px;height:1px;background:#dcdcdc"></div>
<div class="a" style="left:208px;top:85px;width:76px;height:21px;border:1px solid #e6e6e6;box-sizing:border-box;background:#f4f4f4"></div>
<svg class="i" style="left:214px;top:89px" width="16" height="16" viewBox="0 0 16 16" ><rect x=".5" y=".5" width="14" height="13" fill="#fbfcff" stroke="#7090d0" stroke-width="1"/><rect x="0" y="0" width="15" height="3" fill="#6a98e8"/><rect x="8" y="1" width="1.500" height="1.500" fill="#f0d040"/><rect x="10" y="1" width="1.500" height="1.500" fill="#e82020"/><rect x="12" y="1" width="1.500" height="1.500" fill="#f0d040"/><path d="M1.500 12.500l5-5.500h7v5.500z" fill="#e8eefa"/><path d="M14.500 3v10.500h-14.500" fill="none" stroke="#2a3c64" stroke-width="1.200"/></svg>
<div class="t" style="left:231px;top:89px;letter-spacing:-0.07px">TelaInicial</div>
<div class="a" style="left:285px;top:85px;width:160px;height:22px;border:1px solid #ebebeb;border-bottom:none;box-sizing:border-box;background:#fcfcfc"></div>
<svg class="i" style="left:289px;top:88px" width="16" height="16" viewBox="0 0 16 16" ><polygon points="9.37,9.86 9.37,10.94 8.02,11.27 7.72,11.99 8.44,13.18 7.68,13.94 6.49,13.22 5.77,13.52 5.44,14.87 4.36,14.87 4.03,13.52 3.31,13.22 2.12,13.94 1.36,13.18 2.08,11.99 1.78,11.27 0.43,10.94 0.43,9.86 1.78,9.53 2.08,8.81 1.36,7.62 2.12,6.86 3.31,7.58 4.03,7.28 4.36,5.93 5.44,5.93 5.77,7.28 6.49,7.58 7.68,6.86 8.44,7.62 7.72,8.81 8.02,9.53" fill="#6464cc"/><circle cx="4.9" cy="10.4" r="1.35" fill="#c0c0ec"/><defs><radialGradient id="gY"><stop offset="0" stop-color="#ffffd8"/><stop offset=".6" stop-color="#ffff58"/><stop offset="1" stop-color="#f6f238"/></radialGradient></defs><circle cx="11" cy="4.700" r="4.100" fill="url(#gY)"/><path d="M9.800 3.800l1.200 1.800 1.200-1.800M11 5.600v3.500" fill="none" stroke="#333" stroke-width=".8"/><rect x="9.500" y="8.800" width="3" height="3.200" fill="#6a6a6a"/><path d="M9.500 10.400h3" stroke="#aaa" stroke-width=".6"/></svg>
<div class="t" style="left:307px;top:89px;font-weight:700;letter-spacing:0.25px">ConfiguracaoPower</div>
<div class="a" style="left:426px;top:90px;width:13px;height:13px;background:#c75050"></div>
<svg class="i" style="left:429px;top:93px" width="7" height="7" viewBox="0 0 7 7"><path d="M1 1.200l5 4.800M6 1.200l-5 4.800" stroke="#fff" stroke-width="1.500"/></svg>
<svg class="i" style="left:750px;top:89px" width="30" height="12" viewBox="0 0 30 12" fill="none" stroke="#444" stroke-width="1.100"><path d="M6.500 2v8L2.500 6z"/><path d="M22.500 2v8l4-4z"/></svg>
<div class="a" style="left:213px;top:135px;width:557px;height:1px;background:#7e7e7e"></div>
<div class="a" style="left:213px;top:164px;width:557px;height:1px;background:#7e7e7e"></div>
<div class="a" style="left:213px;top:193px;width:557px;height:1px;background:#7e7e7e"></div>
<div class="a" style="left:286px;top:111px;width:1px;height:20px;background:#7c7c7c"></div>
<div class="a" style="left:463px;top:111px;width:1px;height:20px;background:#7c7c7c"></div>
<div class="a" style="left:590px;top:111px;width:1px;height:20px;background:#7c7c7c"></div>
<div class="a" style="left:382px;top:140px;width:1px;height:20px;background:#7c7c7c"></div>
<div class="a" style="left:414px;top:140px;width:1px;height:20px;background:#7c7c7c"></div>
<div class="a" style="left:542px;top:140px;width:1px;height:20px;background:#7c7c7c"></div>
<div class="a" style="left:718px;top:169px;width:1px;height:20px;background:#7c7c7c"></div>
<div class="a" style="left:286px;top:198px;width:1px;height:20px;background:#7c7c7c"></div>
<div class="a" style="left:292px;top:109px;width:22px;height:21px;border:1px solid #98cbf3;border-radius:3px;background:#cce5f8"></div>
<div class="a" style="left:364px;top:109px;width:22px;height:21px;border:1px solid #98cbf3;border-radius:3px;background:#cce5f8"></div>
<div class="a" style="left:620px;top:109px;width:22px;height:21px;border:1px solid #98cbf3;border-radius:3px;background:#cce5f8"></div>
<svg class="i" style="left:216px;top:113px" width="16" height="16" viewBox="0 0 16 16" ><defs><linearGradient id="gB" x1="0" y1="0" x2="0" y2="1"><stop offset="0" stop-color="#dcdcdc"/><stop offset="1" stop-color="#b0b0b0"/></linearGradient></defs><path d="M.8 8.500l6.200-6.200v3.200h7v6h-7v3.200z" fill="url(#gB)" stroke="#9a9a9a" stroke-width=".9"/></svg>
<svg class="i" style="left:240px;top:113px" width="16" height="16" viewBox="0 0 16 16" ><path d="M15.200 8.500l-6.200-6.200v3.200h-7v6h7v3.200z" fill="url(#gB)" stroke="#a4a4a4" stroke-width=".9"/></svg>
<svg class="i" style="left:264px;top:113px" width="16" height="16" viewBox="0 0 16 16" ><path d="M.8 8.500l7.200-7.500 7.200 7.500" fill="none" stroke="#888" stroke-width="1.300"/><path d="M2.500 7.500v8h11v-8" fill="#f4f4f4" stroke="#888"/><path d="M6.500 15.500v-5.500c0-2 3-2 3 0v5.500" fill="#e0e0e0" stroke="#999" stroke-width=".9"/><path d="M6 5.500v2M10 5.500v2" stroke="#aaa"/></svg>
<svg class="i" style="left:297px;top:113px" width="16" height="16" viewBox="0 0 16 16" ><path d="M4.500 2v11.500l2.800-2.700 2 4.700 1.800-.8-2-4.500h3.700z" fill="#1a1a1a" stroke="#555" stroke-width=".6"/></svg>
<svg class="i" style="left:320px;top:113px" width="16" height="16" viewBox="0 0 16 16" ><g fill="#fff" stroke="#2a48d8" stroke-width="1.100"><rect x="1.600" y="1.600" width="3" height="3"/><rect x="3.600" y="6.600" width="3" height="3"/><rect x="1.600" y="11.600" width="3" height="3"/></g><path d="M9 0v16" stroke="#2a48d8" stroke-width="1.100"/><g fill="#2a48d8"><rect x="10.800" y="2.500" width="2.500" height="2.500"/><rect x="10.800" y="6.500" width="2.500" height="2.500"/><rect x="10.800" y="10.500" width="2.500" height="2.500"/></g></svg>
<svg class="i" style="left:344px;top:113px" width="16" height="16" viewBox="0 0 16 16" ><rect x="4.500" y="1.500" width="10" height="8" fill="none" stroke="#2038d8" stroke-width="1.100" stroke-dasharray="2 1.300"/><path d="M1.500 11l3-5h3l1 2.500h1.500l1.500-2h2.500l1.500 5.500z" fill="#687078"/><path d="M4.500 6.500l-2 3.500M11 7l1.500 3" stroke="#c0c8d0" stroke-width=".8"/><circle cx="4" cy="12" r="2.500" fill="#dcecfc" stroke="#687078"/><circle cx="11.500" cy="12.300" r="2.500" fill="#dcecfc" stroke="#687078"/></svg>
<svg class="i" style="left:368px;top:113px" width="16" height="16" viewBox="0 0 16 16" ><text x="8.300" y="14" text-anchor="middle" font-family="Liberation Serif,serif" font-weight="700" font-size="14.500" fill="#2a2a2a">A</text></svg>
<svg class="i" style="left:392px;top:113px" width="16" height="16" viewBox="0 0 16 16" ><circle cx="6" cy="6.300" r="3.900" fill="#f4f6fa" stroke="#2a2a3a" stroke-width="1.400"/><path d="M4.200 5.300v-1h1M6.800 4.300h1v1M7.800 7.300v1h-1M5.200 8.300h-1v-1" fill="none" stroke="#222" stroke-width="1"/><path d="M9 9.500l4.200 4" stroke="#4a78b8" stroke-width="2" stroke-linecap="round"/></svg>
<svg class="i" style="left:416px;top:113px" width="16" height="16" viewBox="0 0 16 16" ><path d="M1.800 5.500v-3h3M10.500 2.500h3v3M13.500 10v3h-3M4.800 13h-3v-3" fill="none" stroke="#1a6ae8" stroke-width="1.200"/><circle cx="7" cy="6.800" r="3" fill="#e6eef8" stroke="#7a8aa0" stroke-width="1"/><path d="M9 9l2.200 2.600" stroke="#5a6a88" stroke-width="1.500"/></svg>
<svg class="i" style="left:441.5px;top:113px" width="16" height="16" viewBox="0 0 16 16" ><path d="M4.500 9.500v-5.500c0-1.200 1.800-1.200 1.800 0v-1.500c0-1.200 1.800-1.200 1.800 0v.5c0-1.200 1.800-1.200 1.800 0v1c0-1.200 1.800-1.200 1.800 0v7c0 3-1.500 4.500-4 4.500s-3.500-1-4.500-3l-2-3.500c-.6-1.200.8-1.800 1.600-.8z" fill="#f4f8ff" stroke="#4a5a78" stroke-width=".9"/><path d="M6.300 4v4M8.100 3.500v4.500M9.900 4.500v3.500" stroke="#7a8aa8" stroke-width=".7"/><path d="M5 15.500h7v.5h-7z" fill="#a8b8d8"/></svg>
<svg class="i" style="left:471px;top:113px" width="16" height="16" viewBox="0 0 16 16" ><rect x="1" y="0" width="2" height="8" fill="#d8a838"/><rect x="5" y="0" width="1" height="6" fill="#777"/><rect x="8" y="0" width="1" height="4" fill="#aaa"/><path d="M4 15.500l1-3.500 8-8 2.500 2.500-8 8z" fill="#f0c040" stroke="#8a6a18" stroke-width=".8"/><path d="M13 4l2.500 2.500 .8-.8c.5-.5-2-3-2.500-2.500z" fill="#e06868"/><path d="M4 15.500l1-3.500 2.500 2.500z" fill="#333"/></svg>
<svg class="i" style="left:496px;top:113px" width="16" height="16" viewBox="0 0 16 16" ><rect x=".5" y="1.500" width="13" height="12" fill="#fafaff" stroke="#b0acf4"/><g fill="#fff" stroke="#1a28c8" stroke-width="1.300"><rect x="2.500" y="3.500" width="2.500" height="2.500"/><rect x="2.500" y="10" width="2.500" height="2.500"/><rect x="8" y="10" width="2.500" height="2.500"/></g><path d="M3.800 6v4M5 11.200h3" stroke="#1a28c8" stroke-width="1.300"/><path d="M5 14.500l1-3.300 7.500-7.500 2.300 2.300-7.500 7.500z" fill="#f0c040" stroke="#8a6a18" stroke-width=".8"/><path d="M13.500 3.700l2.300 2.300 .7-.7c.5-.5-1.800-2.800-2.300-2.300z" fill="#e06868"/><path d="M5 14.500l1-3.300 2.300 2.300z" fill="#333"/></svg>
<svg class="i" style="left:520px;top:113px" width="16" height="16" viewBox="0 0 16 16" ><rect x="1.500" y="1.500" width="13.500" height="12.500" fill="#e8e8e8" stroke="#0a14a0" stroke-width="1.400"/><path d="M5.500 1.500v12.500M1.500 5.700h4M1.500 9.800h4" stroke="#0a14a0" stroke-width="1.300"/><rect x="2.200" y="2.200" width="2.600" height="2.800" fill="#fff"/><rect x="2.200" y="6.400" width="2.600" height="2.700" fill="#fff"/><rect x="2.200" y="10.500" width="2.600" height="2.800" fill="#fff"/></svg>
<svg class="i" style="left:545px;top:113px" width="16" height="16" viewBox="0 0 16 16" ><rect x=".5" y="3.500" width="12" height="12" fill="#fafaff" stroke="#b0acf4"/><g fill="#fff" stroke="#1a28c8" stroke-width="1.300"><rect x="2.500" y="5.500" width="2.500" height="2.500"/><rect x="2.500" y="11.500" width="2.500" height="2.500"/><rect x="8" y="11.500" width="2.500" height="2.500"/></g><path d="M3.800 8v3.500M9.200 8v3.500M5 6.800h4.200" stroke="#1a28c8" stroke-width="1.300" fill="none"/><path d="M11.500 0v8M7.500 4h8M8.700 1.200l5.600 5.600M14.300 1.200L8.700 6.800" stroke="#2a40e8" stroke-width="1"/></svg>
<svg class="i" style="left:569px;top:113px" width="16" height="16" viewBox="0 0 16 16" ><rect x=".5" y="3.500" width="12" height="12" fill="#f6f6f6" stroke="#dcdcdc"/><g fill="#fff" stroke="#b4b4b4" stroke-width="1.200"><rect x="2.500" y="5.500" width="2.500" height="2.500"/><rect x="2.500" y="11.500" width="2.500" height="2.500"/><rect x="8" y="11.500" width="2.500" height="2.500"/></g><path d="M3.800 8v3.500M9.200 8v3.500M5 6.800h3" stroke="#b4b4b4" stroke-width="1.200"/><path d="M11 .5c3 0 4.500 3 4.500 6.500v1h-9v-1c0-3.500 1.500-6.500 4.500-6.500z" fill="#c4c4c4"/><rect x="10.300" y="2.500" width="1.400" height="3.200" fill="#f4f4f4"/><rect x="10.300" y="6.300" width="1.400" height="1.200" fill="#f4f4f4"/></svg>
<svg class="i" style="left:600px;top:113px" width="16" height="16" viewBox="0 0 16 16" ><g fill="#2a3a58" shape-rendering="crispEdges"><rect x="1" y="1" width="1" height="1"/><rect x="4" y="1" width="1" height="1"/><rect x="7" y="1" width="1" height="1"/><rect x="10" y="1" width="1" height="1"/><rect x="13" y="1" width="1" height="1"/><rect x="1" y="4" width="1" height="1"/><rect x="4" y="4" width="1" height="1"/><rect x="7" y="4" width="1" height="1"/><rect x="10" y="4" width="1" height="1"/><rect x="13" y="4" width="1" height="1"/><rect x="1" y="7" width="1" height="1"/><rect x="4" y="7" width="1" height="1"/><rect x="7" y="7" width="1" height="1"/><rect x="10" y="7" width="1" height="1"/><rect x="13" y="7" width="1" height="1"/><rect x="1" y="10" width="1" height="1"/><rect x="4" y="10" width="1" height="1"/><rect x="7" y="10" width="1" height="1"/><rect x="10" y="10" width="1" height="1"/><rect x="13" y="10" width="1" height="1"/><rect x="1" y="13" width="1" height="1"/><rect x="4" y="13" width="1" height="1"/><rect x="7" y="13" width="1" height="1"/><rect x="10" y="13" width="1" height="1"/><rect x="13" y="13" width="1" height="1"/></g></svg>
<svg class="i" style="left:624px;top:113px" width="16" height="16" viewBox="0 0 16 16" ><g fill="#2a3a58" shape-rendering="crispEdges"><rect x="2" y="2" width="1" height="1"/><rect x="5" y="2" width="1" height="1"/><rect x="8" y="2" width="1" height="1"/><rect x="2" y="5" width="1" height="1"/><rect x="5" y="5" width="1" height="1"/><rect x="8" y="5" width="1" height="1"/><rect x="2" y="8" width="1" height="1"/><rect x="5" y="8" width="1" height="1"/><rect x="8" y="8" width="1" height="1"/><rect x="2" y="11" width="1" height="1"/><rect x="5" y="11" width="1" height="1"/><rect x="8" y="11" width="1" height="1"/><rect x="11" y="11" width="1" height="1"/><rect x="14" y="11" width="1" height="1"/><rect x="2" y="14" width="1" height="1"/><rect x="5" y="14" width="1" height="1"/><rect x="8" y="14" width="1" height="1"/><rect x="11" y="14" width="1" height="1"/><rect x="14" y="14" width="1" height="1"/></g><path d="M9.300 9.800v-4.600c0-5.200 8-5.200 8 0v4.600h-2.600v-4.600c0-1.800-2.800-1.800-2.800 0v4.600z" fill="#d82828" stroke="#a01818" stroke-width=".5"/><path d="M10.500 5c.3-2.500 2.500-3 4-2.500" fill="none" stroke="#f08080" stroke-width=".8"/><rect x="9.100" y="7.500" width="3" height="2.500" fill="#222"/><rect x="14.500" y="7.500" width="3" height="2.500" fill="#222"/></svg>
<svg class="i" style="left:216px;top:142px" width="16" height="16" viewBox="0 0 16 16" ><rect x="2" y="2" width="1.600" height="12" fill="#666"/><rect x="5.500" y="2.500" width="5" height="2.500" fill="#eee" stroke="#888" stroke-width=".9"/><rect x="5.500" y="6.500" width="8" height="3.500" fill="#ddd" stroke="#888" stroke-width=".9"/><path d="M5 13h7.500M7 11.500l-2 1.500 2 1.500" fill="none" stroke="#666" stroke-width=".9"/></svg>
<svg class="i" style="left:240px;top:142px" width="16" height="16" viewBox="0 0 16 16" ><g transform="translate(16,0) scale(-1,1)"><rect x="2" y="2" width="1.600" height="12" fill="#666"/><rect x="5.500" y="2.500" width="5" height="2.500" fill="#eee" stroke="#888" stroke-width=".9"/><rect x="5.500" y="6.500" width="8" height="3.500" fill="#ddd" stroke="#888" stroke-width=".9"/><path d="M5 13h7.500M7 11.500l-2 1.500 2 1.500" fill="none" stroke="#666" stroke-width=".9"/></g></svg>
<svg class="i" style="left:264px;top:142px" width="16" height="16" viewBox="0 0 16 16" ><rect x="2" y="2" width="12" height="1.600" fill="#666"/><rect x="3.500" y="5.500" width="2" height="4.500" fill="#eee" stroke="#888" stroke-width=".9"/><rect x="7.500" y="5.500" width="3" height="8" fill="#ddd" stroke="#888" stroke-width=".9"/><path d="M13 13v-7.500M11.700 7.500l1.300-2 1.300 2" fill="none" stroke="#555" stroke-width=".9"/></svg>
<svg class="i" style="left:288px;top:142px" width="16" height="16" viewBox="0 0 16 16" ><rect x="2" y="12.400" width="12" height="1.600" fill="#555"/><rect x="3.500" y="5.500" width="2" height="5" fill="#eee" stroke="#888" stroke-width=".9"/><rect x="7.500" y="2.500" width="3" height="8" fill="#ddd" stroke="#888" stroke-width=".9"/><path d="M13 3v7.500M11.700 8.500l1.300 2 1.300-2" fill="none" stroke="#555" stroke-width=".9"/></svg>
<svg class="i" style="left:312px;top:142px" width="16" height="16" viewBox="0 0 16 16" ><path d="M8 2v12" stroke="#666" stroke-width="1.200"/><rect x="7" y="2" width="2" height="1.500" fill="#555"/><rect x="7" y="13" width="2" height="1.500" fill="#555"/><rect x="5.500" y="4.500" width="5" height="2.500" fill="#eee" stroke="#888" stroke-width=".9"/><rect x="3.500" y="8.500" width="9" height="3" fill="#ddd" stroke="#888" stroke-width=".9"/></svg>
<svg class="i" style="left:336px;top:142px" width="16" height="16" viewBox="0 0 16 16" ><path d="M2 8h12" stroke="#666" stroke-width="1.200"/><rect x="2" y="7" width="1.500" height="2" fill="#555"/><rect x="13" y="7" width="1.500" height="2" fill="#555"/><rect x="4.500" y="6" width="2" height="4" fill="#eee" stroke="#888" stroke-width=".9"/><rect x="8.500" y="3.500" width="3" height="9" fill="#ddd" stroke="#888" stroke-width=".9"/></svg>
<svg class="i" style="left:360px;top:142px" width="16" height="16" viewBox="0 0 16 16" ><g fill="#a8a8a8" shape-rendering="crispEdges"><rect x="1" y="1" width="1" height="1"/><rect x="4" y="1" width="1" height="1"/><rect x="7" y="1" width="1" height="1"/><rect x="10" y="1" width="1" height="1"/><rect x="13" y="1" width="1" height="1"/><rect x="1" y="4" width="1" height="1"/><rect x="4" y="4" width="1" height="1"/><rect x="7" y="4" width="1" height="1"/><rect x="10" y="4" width="1" height="1"/><rect x="13" y="4" width="1" height="1"/><rect x="1" y="7" width="1" height="1"/><rect x="4" y="7" width="1" height="1"/><rect x="7" y="7" width="1" height="1"/><rect x="10" y="7" width="1" height="1"/><rect x="13" y="7" width="1" height="1"/><rect x="1" y="10" width="1" height="1"/><rect x="4" y="10" width="1" height="1"/><rect x="7" y="10" width="1" height="1"/><rect x="10" y="10" width="1" height="1"/><rect x="13" y="10" width="1" height="1"/><rect x="1" y="13" width="1" height="1"/><rect x="4" y="13" width="1" height="1"/><rect x="7" y="13" width="1" height="1"/><rect x="10" y="13" width="1" height="1"/><rect x="13" y="13" width="1" height="1"/></g><path d="M1 7.200h4.500M3.800 5l2.400 2.200-2.400 2.200M6.500 7.500l2.500 2.500M8.500 14.500v-5M6.300 11.300l2.200-2.300 2.200 2.300" fill="none" stroke="#777" stroke-width="1.100"/></svg>
<svg class="i" style="left:392px;top:142px" width="16" height="16" viewBox="0 0 16 16" ><path d="M3.500 7v-2.500c0-5 9-5 9 0v2.500" fill="none" stroke="#a0a0a0" stroke-width="2.200"/><path d="M3.500 7v-2.500c0-5 9-5 9 0v2.500" fill="none" stroke="#e0e0e0" stroke-width=".8"/><defs><linearGradient id="gL" x1="0" y1="0" x2="1" y2="0"><stop offset="0" stop-color="#f8c860"/><stop offset=".5" stop-color="#fff4d0"/><stop offset="1" stop-color="#f8c048"/></linearGradient></defs><rect x="1.500" y="6.500" width="13.500" height="8.500" rx=".6" fill="url(#gL)" stroke="#e89828"/></svg>
<svg class="i" style="left:424px;top:142px" width="16" height="16" viewBox="0 0 16 16" ><circle cx="8" cy="8" r="5.600" fill="#e6e8ff" stroke="#5050ff" stroke-width=".9"/></svg>
<svg class="i" style="left:448px;top:142px" width="16" height="16" viewBox="0 0 16 16" ><path d="M8 4.500l2.600 4-2.600 3.500-2.600-3.500z" fill="#c2c2c2" opacity=".45"/><g fill="none" stroke="#c2c2c2" stroke-width="1.400"><path d="M4 .8h8" stroke-width="1.600"/><path d="M0 2.200h16" stroke-width="1.100"/><path d="M1 2.200v1.800M3.500 2.200v1.800M12.500 2.200v1.800M15 2.200v1.800" stroke-width="1.100"/><path d="M7 3.500h2" stroke-width="1.600"/><path d="M4 2.800l7 8.700 1.700 4M12 2.800l-7 8.700-1.700 4"/><path d="M7 12l-.7 3.500M9 12l.7 3.500" stroke-width="1.100"/><path d="M2 15.500h2.500M11.500 15.500h2.500" stroke-width="1.100"/></g></svg>
<svg class="i" style="left:472px;top:142px" width="16" height="16" viewBox="0 0 16 16" ><circle cx="7.500" cy="7.500" r="5" fill="#f0f0ff" stroke="#5050ff" stroke-width=".9"/><path d="M7.500 4.200v5.500M5.200 7.800l2.300 2.300 2.300-2.300" fill="none" stroke="#4848ff" stroke-width="1"/><path d="M5 11h5" stroke="#5050ff" stroke-width=".7"/></svg>
<svg class="i" style="left:496px;top:142px" width="16" height="16" viewBox="0 0 16 16" ><g fill="none" stroke="#4848ff"><path d="M5 15.500v-13" stroke-width="1.300"/><path d="M5 4.500l-3.800 4.500M5 4.500l3.800 4.500" stroke-width="1"/><path d="M10.500 15.500v-7.500M10.500 9l-2.200 2.800M10.500 9l2.200 2.800" stroke-width=".9"/><path d="M14 15.500v-5M14 11l-1.500 2M14 11l1.500 2" stroke-width=".8"/></g></svg>
<svg class="i" style="left:520px;top:142px" width="16" height="16" viewBox="0 0 16 16" ><circle cx="7.700" cy="7.700" r="7" fill="#f0f0ff" stroke="#5050ff" stroke-width=".9"/><path d="M12 3.500l-7.500 6.500M4.300 6.500v3.800h4.200M8 7.500h3.500" fill="none" stroke="#4848ff" stroke-width="1"/></svg>
<svg class="i" style="left:552px;top:142px" width="16" height="16" viewBox="0 0 16 16" ><path d="M3.500 12.500l9-9" stroke="#bdbdbd" stroke-width="1"/><rect x="1.500" y="12" width="2.500" height="2.500" fill="#fff" stroke="#b4b4b4" stroke-width=".8"/><rect x="12" y="1.500" width="2.500" height="2.500" fill="#fff" stroke="#b4b4b4" stroke-width=".8"/></svg>
<svg class="i" style="left:576px;top:142px" width="16" height="16" viewBox="0 0 16 16" ><path d="M.5 15.500h3.500v-3.500h3l3.500-4.500h3v-4.500h2.500v-2.500" fill="none" stroke="#8a8a8a" stroke-width="1.100"/></svg>
<svg class="i" style="left:600px;top:142px" width="16" height="16" viewBox="0 0 16 16" ><path d="M1.500 13l6-9.500 3.500 5.500 4.500-5" fill="none" stroke="#c0c0c0" stroke-width="1"/><rect x="0.500" y="12" width="2.500" height="2.500" fill="#fff" stroke="#b4b4b4" stroke-width=".8"/><rect x="6.500" y="2" width="2.500" height="2.500" fill="#fff" stroke="#b4b4b4" stroke-width=".8"/><rect x="10" y="7.500" width="2.500" height="2.500" fill="#fff" stroke="#b4b4b4" stroke-width=".8"/></svg>
<svg class="i" style="left:623px;top:142px" width="16" height="16" viewBox="0 0 16 16" ><circle cx="8" cy="7.500" r="3.800" fill="#f4f4ff" stroke="#5050ff" stroke-width=".9"/><circle cx="8" cy="7.500" r="1.700" fill="#d0d0ff" stroke="#5050ff" stroke-width=".9"/></svg>
<svg class="i" style="left:648px;top:142px" width="16" height="16" viewBox="0 0 16 16" ><circle cx="6.800" cy="9.200" r="5.300" fill="#ececec" stroke="#d0d0d0" stroke-width="1"/><path d="M6.800 9.200l6-6" stroke="#bcbcbc" stroke-width="1.200"/><path d="M9.500 2.200h4.500v4.500z" fill="#c0c0c0"/></svg>
<svg class="i" style="left:672px;top:142px" width="16" height="16" viewBox="0 0 16 16" ><path d="M0 8h16" stroke="#777" stroke-width=".9"/><circle cx="8" cy="8" r="3.800" fill="#fff" stroke="#777" stroke-width=".9"/><path d="M8 5.800l2.200 2.200-2.200 2.200-2.200-2.200z" fill="#fff" stroke="#888" stroke-width=".8"/></svg>
<svg class="i" style="left:216.5px;top:171px" width="16" height="16" viewBox="0 0 16 16" ><g fill="none" stroke="#c6c6c6" stroke-width="1"><path d="M8 0v3M8 11.500v4.500"/><rect x="3.500" y="3" width="9" height="8.500" fill="#ededf0"/></g></svg>
<svg class="i" style="left:243px;top:171px" width="16" height="16" viewBox="0 0 16 16" ><g fill="none" stroke="#c6c6c6" stroke-width="1"><path d="M7 0v3M7 16v-4l4-5M8.500 6.500h3v3"/></g></svg>
<svg class="i" style="left:264.5px;top:171px" width="16" height="16" viewBox="0 0 16 16" ><g fill="none" stroke="#c6c6c6" stroke-width="1"><path d="M8 0v4l-2.500 2.500 4 3-2.500 2.500h1v4"/></g></svg>
<svg class="i" style="left:288.5px;top:171px" width="16" height="16" viewBox="0 0 16 16" ><g fill="none" stroke="#c6c6c6" stroke-width="1"><path d="M8 0v2M8 14.500v1.500M8 2l4.300 4.500v4l-4.300 4-4.300-4v-4z"/><circle cx="8" cy="7.300" r="3.300"/><circle cx="8" cy="9.300" r="3.300"/></g></svg>
<svg class="i" style="left:312px;top:171px" width="16" height="16" viewBox="0 0 16 16" ><g fill="none" stroke="#a2a2a2" stroke-width="0.9"><path d="M8 0v2M6.500 13.500v2.500M9.500 13.500v2.500M8 2l5.500 5v3.500l-3.500 3h-4l-3.500-3v-3.500z"/><circle cx="6.500" cy="9" r="3"/><circle cx="9.500" cy="9" r="3"/><circle cx="8" cy="7" r="3"/></g></svg>
<svg class="i" style="left:336.5px;top:171px" width="16" height="16" viewBox="0 0 16 16" ><g fill="none" stroke="#c6c6c6" stroke-width="1"><path d="M8 1v6"/><path d="M2 7h12.500l-6.250 6.500z" fill="#ececf0"/></g></svg>
<svg class="i" style="left:360.4px;top:171px" width="16" height="16" viewBox="0 0 16 16" ><g fill="none" stroke="#c6c6c6" stroke-width="1"><circle cx="8" cy="6.500" r="5" fill="#f2f2f8"/><path d="M8 11.500v3.500M6.500 3.300l3 3.200-3 3.200"/></g></svg>
<svg class="i" style="left:385px;top:171px" width="16" height="16" viewBox="0 0 16 16" ><g fill="none" stroke="#c6c6c6" stroke-width="1"><path d="M7.500 1v1.500c3.500 0 3.500 2.300 0 2.300 3.500 0 3.500 2.300 0 2.300 3.500 0 3.500 2.300 0 2.300v3.800"/><path d="M4.500 13.200h6l-3 3z" fill="#d0d0d0" stroke="none"/></g></svg>
<svg class="i" style="left:408.4px;top:171px" width="16" height="16" viewBox="0 0 16 16" ><g fill="none" stroke="#c6c6c6" stroke-width="1"><path d="M8 0v4.300M3.500 4.500h9M3.500 8.500h9M8 8.500v4.500"/><path d="M5 13.200h6l-3 3z" fill="#d0d0d0" stroke="none"/></g></svg>
<svg class="i" style="left:432px;top:171px" width="16" height="16" viewBox="0 0 16 16" ><g fill="none" stroke="#c6c6c6" stroke-width="1"><path d="M8 2v3.500M4 9v4M8 9v4M12 9v4"/><rect x="1.500" y="5.500" width="13" height="3.500" fill="#eee"/></g></svg>
<svg class="i" style="left:456.4px;top:171px" width="16" height="16" viewBox="0 0 16 16" ><g fill="none" stroke="#a2a2a2" stroke-width="1"><path d="M8 0v3"/><circle cx="8" cy="8.500" r="5.300" fill="#fafafa"/><path d="M8 5.500l-2.500 5h5z"/></g></svg>
<svg class="i" style="left:480.7px;top:171px" width="16" height="16" viewBox="0 0 16 16" ><g fill="none" stroke="#c6c6c6" stroke-width="1"><path d="M8 0v3.500M8 12.500v3.500"/><rect x="3.500" y="3.500" width="9" height="9" fill="#f2f2f2"/></g><text x="8" y="11.200" text-anchor="middle" font-family="Liberation Sans,sans-serif" font-size="8" fill="#b0b0b0">R</text></svg>
<svg class="i" style="left:504.5px;top:171px" width="16" height="16" viewBox="0 0 16 16" ><g fill="none" stroke="#a2a2a2" stroke-width="1"><path d="M8 0v3M8 13v3"/><circle cx="8" cy="8" r="4.800"/><path d="M2.500 13.500l11-11M10 2.500h3.500v3.500"/></g></svg>
<svg class="i" style="left:528.2px;top:171px" width="16" height="16" viewBox="0 0 16 16" ><g fill="none" stroke="#c6c6c6" stroke-width="1"><path d="M8 16v-14.500" stroke-width="1.400"/><path d="M8 5l-5 5.500M8 5l5 5.500" stroke-width="1.100"/></g></svg>
<svg class="i" style="left:552.2px;top:171px" width="16" height="16" viewBox="0 0 16 16" ><g fill="none" stroke="#c6c6c6" stroke-width="1"><path d="M8 16v-13.500" stroke-width="1.300"/><path d="M2 6.500l6-1 6 1"/></g><g fill="#c4c4c4"><circle cx="8" cy="2.500" r="1.600"/><circle cx="2" cy="6.800" r="1.600"/><circle cx="14" cy="6.800" r="1.600"/></g></svg>
<svg class="i" style="left:576px;top:171px" width="16" height="16" viewBox="0 0 16 16" ><g fill="none" stroke="#c6c6c6" stroke-width="1"><rect x=".5" y="2.500" width="6" height="4" rx="1" fill="#f0f0f0"/><rect x="9.500" y="2.500" width="6" height="4" rx="1" fill="#f0f0f0"/><rect x=".5" y="8.500" width="6" height="4" rx="1" fill="#f0f0f0"/><rect x="9.500" y="8.500" width="6" height="4" rx="1" fill="#f0f0f0"/><path d="M2 4.500h2M11 4.500h2M2 10.500h2M11 10.500h2"/></g></svg>
<svg class="i" style="left:600px;top:171px" width="16" height="16" viewBox="0 0 16 16" ><g fill="none" stroke="#c6c6c6" stroke-width="1"><rect x="1.500" y="1" width="13" height="13.500" rx="1" fill="#f2f2f2"/><path d="M2.500 13.500l11-11.500M3.500 3.500h4M3.500 5.500h4M8.500 11.500c1-2 2-2 2.500 0s1.500 2 2.500 0"/></g></svg>
<svg class="i" style="left:624.5px;top:171px" width="16" height="16" viewBox="0 0 16 16" ><g fill="none" stroke="#c6c6c6" stroke-width="1"><rect x=".5" y="3.500" width="15" height="8" fill="#f4f4f4"/><path d="M8 0v6M4 9.500v5M8 9.500v5M12 9.500v5"/><rect x="2.500" y="6" width="11" height="3.500" fill="#eee"/></g></svg>
<svg class="i" style="left:647px;top:171px" width="16" height="16" viewBox="0 0 16 16" ><text x="-.5" y="5" font-family="Liberation Sans,sans-serif" font-size="5.500" font-weight="700" fill="#c0c0c0" letter-spacing=".6">DC</text><g fill="none" stroke="#c6c6c6" stroke-width="1"><path d="M4.500 12l8.500-8.500"/><rect x="2.500" y="11.500" width="2.500" height="2.500" fill="#fff"/><rect x="12" y="2" width="2.500" height="2.500" fill="#fff"/></g></svg>
<svg class="i" style="left:672px;top:171px" width="16" height="16" viewBox="0 0 16 16" ><text x="-.5" y="5" font-family="Liberation Sans,sans-serif" font-size="5.500" font-weight="700" fill="#c0c0c0" letter-spacing=".6">DC</text><g fill="none" stroke="#a2a2a2" stroke-width="1"><path d="M1 15.500h2.500v-2.500h2.500l1.500-3h2l1.500-3h2.500v-2.500h2v-3.500" stroke-width="1.100"/></g></svg>
<svg class="i" style="left:695px;top:171px" width="16" height="16" viewBox="0 0 16 16" ><g fill="none" stroke="#d0d0d0" stroke-width="1"><circle cx="8" cy="7.500" r="3.800"/><circle cx="8" cy="7.500" r="1.700" fill="#e8e8e8"/></g></svg>
<svg class="i" style="left:728px;top:171px" width="16" height="16" viewBox="0 0 16 16" ><path d="M3 .8c-1.500 .8-1.500 1.600 0 2.400s1.500 1.600 0 2.400-1.500 1.600 0 2.400 1.500 1.600 0 2.400-1.500 1.600 0 2.400 1.500 1.600 0 2.400" fill="none" stroke="#b8b8b8" stroke-width=".9"/><path d="M13.500 .5v15" stroke="#b0b0b0" stroke-width="1.200"/><path d="M5.500 8h5.500" stroke="#444" stroke-width="1.200"/><path d="M9 5.800l2.800 2.200-2.800 2.200z" fill="#444"/></svg>
<svg class="i" style="left:752px;top:171px" width="16" height="16" viewBox="0 0 16 16" ><path d="M13 .8c-1.500 .8-1.500 1.600 0 2.400s1.500 1.600 0 2.400-1.500 1.600 0 2.400 1.500 1.600 0 2.400-1.500 1.600 0 2.400 1.500 1.600 0 2.400" fill="none" stroke="#b8b8b8" stroke-width=".9"/><path d="M2.500 .5v15" stroke="#b0b0b0" stroke-width="1.200"/><path d="M5 8h5.500" stroke="#444" stroke-width="1.200"/><path d="M8.500 5.800l2.800 2.200-2.800 2.200z" fill="#444"/></svg>
<svg class="i" style="left:216px;top:200px" width="16" height="16" viewBox="0 0 16 16" ><g fill="none" stroke="#c4c4c4" stroke-width="1"><path d="M4.500 0v3.500h6v6.500M4.500 6.500v2.500M4.500 13.500v2.500M12.500 10l-2.500 3.500v2.500"/><rect x="2.500" y="9" width="4" height="4.500" fill="#f4f4f4"/></g></svg>
<svg class="i" style="left:239.5px;top:200px" width="16" height="16" viewBox="0 0 16 16" ><g fill="none" stroke="#c4c4c4" stroke-width="1"><path d="M4.500 0v3.500h6v6.500M4.500 6.500v2.500M4.500 13.500v2.500M12.500 10l-2.500 3.500v2.500"/><rect x="2.500" y="9" width="4" height="4.500" fill="#f4f4f4"/></g><path d="M0 4h6v-2.500l4 3.500-4 3.500v-2.500h-6z" fill="#a8a8a8"/></svg>
<svg class="i" style="left:263.5px;top:200px" width="16" height="16" viewBox="0 0 16 16" ><g fill="none" stroke="#c4c4c4" stroke-width="1"><path d="M4.500 0v3.500h6v6.500M4.500 6.500v2.500M4.500 13.500v2.500M12.500 10l-2.500 3.500v2.500"/><rect x="2.500" y="9" width="4" height="4.500" fill="#f4f4f4"/></g><path d="M10.500 4h-5v-2.500l-4.500 3.500 4.500 3.500v-2.500h5z" fill="#7a7a7a"/></svg>
<svg class="i" style="left:296px;top:200px" width="16" height="16" viewBox="0 0 16 16" ><path d="M8 4.500l2.600 4-2.600 3.500-2.600-3.500z" fill="#9a9a9a" opacity=".45"/><g fill="none" stroke="#9a9a9a" stroke-width="1.400"><path d="M4 .8h8" stroke-width="1.600"/><path d="M0 2.200h16" stroke-width="1.100"/><path d="M1 2.200v1.800M3.500 2.200v1.800M12.500 2.200v1.800M15 2.200v1.800" stroke-width="1.100"/><path d="M7 3.500h2" stroke-width="1.600"/><path d="M4 2.800l7 8.700 1.700 4M12 2.800l-7 8.700-1.700 4"/><path d="M7 12l-.7 3.500M9 12l.7 3.500" stroke-width="1.100"/><path d="M2 15.500h2.500M11.500 15.500h2.500" stroke-width="1.100"/></g></svg>
<svg class="i" style="left:320px;top:200px" width="16" height="16" viewBox="0 0 16 16" ><path d="M8 4.500l2.600 4-2.600 3.500-2.600-3.500z" fill="#9a9a9a" opacity=".45"/><g fill="none" stroke="#9a9a9a" stroke-width="1.400"><path d="M4 .8h8" stroke-width="1.600"/><path d="M0 2.200h16" stroke-width="1.100"/><path d="M1 2.200v1.800M3.500 2.200v1.800M12.500 2.200v1.800M15 2.200v1.800" stroke-width="1.100"/><path d="M7 3.500h2" stroke-width="1.600"/><path d="M4 2.800l7 8.700 1.700 4M12 2.800l-7 8.700-1.700 4"/><path d="M7 12l-.7 3.500M9 12l.7 3.500" stroke-width="1.100"/><path d="M2 15.500h2.500M11.500 15.500h2.500" stroke-width="1.100"/></g><path d="M0 7h6v-2.500l4 3.500-4 3.500v-2.500h-6z" fill="#a8a8a8"/></svg>
<svg class="i" style="left:343px;top:200px" width="16" height="16" viewBox="0 0 16 16" ><path d="M8 4.500l2.600 4-2.600 3.500-2.600-3.500z" fill="#9a9a9a" opacity=".45"/><g fill="none" stroke="#9a9a9a" stroke-width="1.400"><path d="M4 .8h8" stroke-width="1.600"/><path d="M0 2.200h16" stroke-width="1.100"/><path d="M1 2.200v1.800M3.500 2.200v1.800M12.500 2.200v1.800M15 2.200v1.800" stroke-width="1.100"/><path d="M7 3.500h2" stroke-width="1.600"/><path d="M4 2.800l7 8.700 1.700 4M12 2.800l-7 8.700-1.700 4"/><path d="M7 12l-.7 3.500M9 12l.7 3.500" stroke-width="1.100"/><path d="M2 15.500h2.500M11.500 15.500h2.500" stroke-width="1.100"/></g><path d="M12 7h-6v-2.500l-5 3.500 5 3.500v-2.500h6z" fill="#6e6e6e"/></svg>
<div class="a" style="left:208px;top:221px;width:575px;height:365px;background:#fafafa"></div>
<div class="a" style="left:210px;top:221px;width:574px;height:365px;background:#fff"></div>
<div class="a" style="left:210px;top:221px;width:572px;height:363px;background:#686868"></div>
<div class="a" style="left:212px;top:223px;width:570px;height:361px;background:#f5f5f5"></div>
<div class="a" style="left:212px;top:223px;width:570px;height:17px;background:#676767"></div>
<div class="a" style="left:212px;top:223px;width:56px;height:17px;background:#999"></div>
<div class="a" style="left:726px;top:223px;width:56px;height:17px;background:#999"></div>
<div class="t" style="left:215px;top:225px;color:#fff;letter-spacing:-0.1px">System</div>
<div class="a" style="left:268px;top:240px;width:458px;height:312px;background:#000"></div>
<div class="a" style="left:212px;top:552px;width:570px;height:16px;background:#676767"></div>
<div class="a" style="left:212px;top:552px;width:56px;height:15px;background:#999"></div>
<div class="a" style="left:726px;top:552px;width:56px;height:15px;background:#999"></div>
<div class="a" style="left:212px;top:567px;width:570px;height:1px;background:#5a5a5a"></div>
<div class="t" style="left:215px;top:553px;color:#fff;letter-spacing:-0.15px">X:215,000 Y:15,000</div>
<svg class="i" style="left:728px;top:331px" width="7" height="11" viewBox="0 0 7 11"><path d="M5.500 .8v9.400L.8 5.500z" fill="#aaa"/></svg>
<div class="a" style="left:741px;top:247px;width:34px;height:178px;background:#9d9d9d"></div>
<div class="a" style="left:747px;top:253px;width:20px;height:20px;border:1px solid #8a8a8a;background:#f2f2f2"></div>
<div class="a" style="left:747px;top:397px;width:20px;height:20px;border:1px solid #8a8a8a;background:#f2f2f2"></div>
<div class="a" style="left:756px;top:285px;width:4px;height:97px;background:#d2d2d2"></div>
<div class="a" style="left:747px;top:382px;width:20px;height:8px;border:1px solid #8a8a8a;background:#f4f4f4"></div>
<svg class="i" style="left:749px;top:255px" width="16" height="16" viewBox="0 0 16 16" ><circle cx="6.500" cy="6.500" r="5" fill="#fff" stroke="#444" stroke-width="1.200"/><path d="M4 6.500h5M6.500 4v5" stroke="#333" stroke-width="1"/><path d="M10.200 10.200l4.600 4.600" stroke="#888" stroke-width="2.200"/></svg>
<svg class="i" style="left:749px;top:399px" width="16" height="16" viewBox="0 0 16 16" ><circle cx="6.500" cy="6.500" r="5" fill="#fff" stroke="#444" stroke-width="1.200"/><path d="M4 6.500h5" stroke="#333" stroke-width="1"/><path d="M10.200 10.200l4.600 4.600" stroke="#888" stroke-width="2.200"/></svg>
<div class="a" style="left:212px;top:568px;width:570px;height:16px;background:#f0f0f0"></div>
<div class="a" style="left:208px;top:586px;width:579px;height:3px;background:#f0f0f0"></div>
<svg class="i" style="left:212px;top:568px" width="570" height="17" viewBox="212 568 570 17"><rect x="285" y="568" width="497" height="16" fill="#f6f6f6"/><path d="M654 568L661.500 583.500H771.500L779 568z" fill="#fff"/><path d="M285 583.500H338.500L345.500 568 M342.500 575.500L346.500 583.500H408.500L415.500 568 M412.500 575.500L416.500 583.500H468.500L475.500 568 M472.500 575.500L476.500 583.500H593.500L600.500 568 M597.500 575.500L601.500 583.500H653.500L657 576 M654 568L661.500 583.500H771.500L779 568 M775.500 575.500L779.500 583.500H782" fill="none" stroke="#000" stroke-width="1"/><g fill="#333"><rect x="216" y="573" width="1.300" height="7"/><path d="M222.500 573v7l-4.300-3.500z"/><path d="M239.500 573v7l-4.300-3.500z"/><path d="M253.500 573v7l4.300-3.500z"/><path d="M270 573v7l4.300-3.500z"/><rect x="275.200" y="573" width="1.300" height="7"/></g></svg>
<div class="a" style="left:285px;top:568px;width:60px;height:15px;overflow:hidden"><div class="t" style="left:-7px;top:0px;letter-spacing:-0.15px">Comandos</div></div>
<div class="t" style="left:352px;top:568px;letter-spacing:-0.15px">Proteções</div>
<div class="t" style="left:422px;top:568px;letter-spacing:-0.36px">Tensões</div>
<div class="t" style="left:486px;top:568px;letter-spacing:-0.06px">Chaves/Disjuntores</div>
<div class="t" style="left:606px;top:568px;letter-spacing:-0.5px">Medidas</div>
<div class="t" style="left:663px;top:568px;font-weight:700;letter-spacing:0.3px">Modelador Elétrico</div>
<!-- ===== status bar ===== -->
<div class="a" style="left:1px;top:588px;width:786px;height:2px;background:linear-gradient(#e6e6e6,#d8d8d8)"></div>
<div class="a" style="left:1px;top:590px;width:786px;height:21px;background:#f0f0f0"></div>
<div class="t" style="left:5px;top:594px;letter-spacing:-0.1px">Para Ajuda, pressione F1</div>
<div class="a" style="left:634px;top:591px;width:1px;height:19px;background:#d2d2d2"></div>
<div class="a" style="left:768px;top:591px;width:1px;height:19px;background:#d2d2d2"></div>
<svg class="i" style="left:497px;top:593px" width="10" height="16" viewBox="0 0 10 16"><defs><linearGradient id="gC" x1="0" y1="0" x2="1" y2="0"><stop offset="0" stop-color="#555"/><stop offset="1" stop-color="#000"/></linearGradient></defs><path d="M.3 .5v10.500l2.500-2.300 2 4.800 1.600-.7-2-4.600h3.600z" fill="url(#gC)"/></svg>
<svg class="i" style="left:640px;top:593px" width="14" height="15" viewBox="0 0 14 15" shape-rendering="crispEdges"><rect x="5" y="6" width="8" height="8" fill="#a8a8a8"/><rect x="4.500" y="5.500" width="8" height="8" fill="none" stroke="#222" stroke-width="1" stroke-dasharray="1 1"/><g fill="#1a50ff"><rect x="4" y="1" width="1" height="3"/><rect x="4" y="7" width="1" height="3"/><rect x="0" y="5" width="3" height="1"/><rect x="5" y="5" width="3" height="1"/></g></svg>
<svg class="i" style="left:776px;top:600px" width="10" height="10" viewBox="0 0 10 10" shape-rendering="crispEdges"><g fill="#b4b4b4"><rect x="7" y="1" width="2" height="2"/><rect x="4" y="4" width="2" height="2"/><rect x="7" y="4" width="2" height="2"/><rect x="1" y="7" width="2" height="2"/><rect x="4" y="7" width="2" height="2"/><rect x="7" y="7" width="2" height="2"/></g></svg>
</div>

</div>
</body></html>
